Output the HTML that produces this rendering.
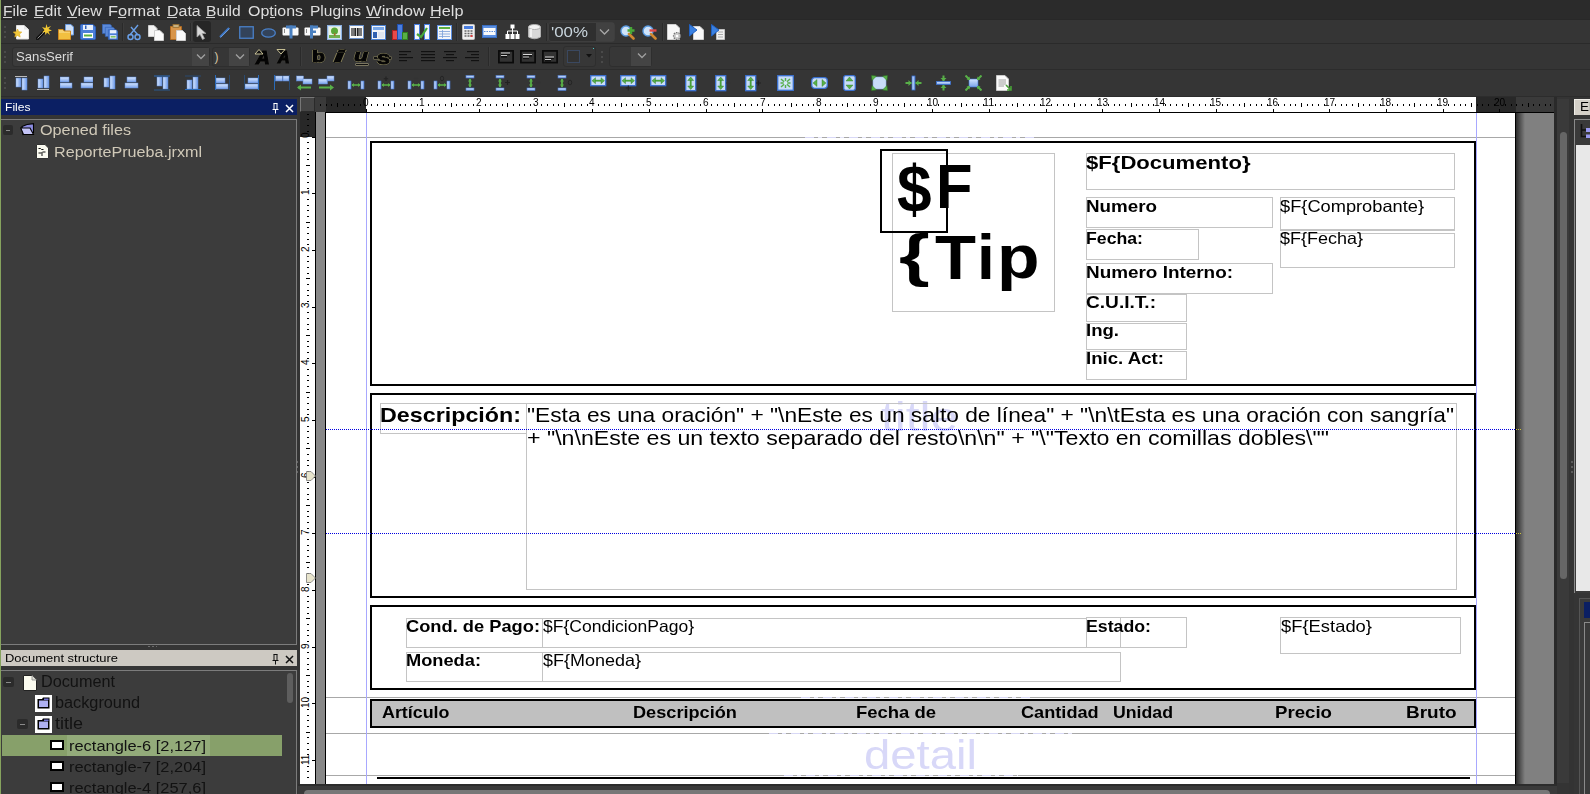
<!DOCTYPE html>
<html><head><meta charset="utf-8"><style>
html,body{margin:0;padding:0;}
body{width:1590px;height:794px;overflow:hidden;position:relative;background:#353535;font-family:"Liberation Sans", sans-serif;}
div,svg{box-sizing:border-box;}
</style></head><body>
<div style="position:absolute;left:0px;top:0px;width:1590px;height:20px;background:#2b2b2b"></div>
<div style="position:absolute;left:0px;top:19px;width:1590px;height:1px;background:#282828"></div>
<div style="position:absolute;left:0px;top:20px;width:1590px;height:23px;background:#353535"></div>
<div style="position:absolute;left:0px;top:43px;width:1590px;height:1px;background:#2a2a2a"></div>
<div style="position:absolute;left:0px;top:44px;width:1590px;height:25px;background:#353535"></div>
<div style="position:absolute;left:0px;top:69px;width:1590px;height:1px;background:#2c2c2c"></div>
<div style="position:absolute;left:0px;top:70px;width:1590px;height:26px;background:#353535"></div>
<div style="position:absolute;left:0px;top:96px;width:1590px;height:1px;background:#2c2c2c"></div>
<div style="position:absolute;left:0px;top:97px;width:1590px;height:697px;background:#353535"></div>
<div style="position:absolute;left:3px;top:3.15px;font-size:15.3px;line-height:15.3px;white-space:pre;color:#dedede;transform:scaleX(1.0139);transform-origin:0 0;">File</div>
<div style="position:absolute;left:3px;top:17px;width:9px;height:1px;background:#d0d0d0"></div>
<div style="position:absolute;left:34px;top:3.15px;font-size:15.3px;line-height:15.3px;white-space:pre;color:#dedede;transform:scaleX(1.0395);transform-origin:0 0;">Edit</div>
<div style="position:absolute;left:34px;top:17px;width:9px;height:1px;background:#d0d0d0"></div>
<div style="position:absolute;left:66.7px;top:3.15px;font-size:15.3px;line-height:15.3px;white-space:pre;color:#dedede;transform:scaleX(1.0641);transform-origin:0 0;">View</div>
<div style="position:absolute;left:66.7px;top:17px;width:10px;height:1px;background:#d0d0d0"></div>
<div style="position:absolute;left:108px;top:3.15px;font-size:15.3px;line-height:15.3px;white-space:pre;color:#dedede;transform:scaleX(1.0732);transform-origin:0 0;">Format</div>
<div style="position:absolute;left:117.5px;top:17px;width:8.5px;height:1px;background:#d0d0d0"></div>
<div style="position:absolute;left:167.3px;top:3.15px;font-size:15.3px;line-height:15.3px;white-space:pre;color:#dedede;transform:scaleX(1.0429);transform-origin:0 0;">Data</div>
<div style="position:absolute;left:167.3px;top:17px;width:10px;height:1px;background:#d0d0d0"></div>
<div style="position:absolute;left:206.3px;top:3.15px;font-size:15.3px;line-height:15.3px;white-space:pre;color:#dedede;transform:scaleX(1.0201);transform-origin:0 0;">Build</div>
<div style="position:absolute;left:206.3px;top:17px;width:9px;height:1px;background:#d0d0d0"></div>
<div style="position:absolute;left:247.8px;top:3.15px;font-size:15.3px;line-height:15.3px;white-space:pre;color:#dedede;transform:scaleX(1.0433);transform-origin:0 0;">Options</div>
<div style="position:absolute;left:269.8px;top:17px;width:5px;height:1px;background:#d0d0d0"></div>
<div style="position:absolute;left:310px;top:3.15px;font-size:15.3px;line-height:15.3px;white-space:pre;color:#dedede;transform:scaleX(1.0165);transform-origin:0 0;">Plugins</div>
<div style="position:absolute;left:366px;top:3.15px;font-size:15.3px;line-height:15.3px;white-space:pre;color:#dedede;transform:scaleX(1.0844);transform-origin:0 0;">Window</div>
<div style="position:absolute;left:366px;top:17px;width:14px;height:1px;background:#d0d0d0"></div>
<div style="position:absolute;left:429.8px;top:3.15px;font-size:15.3px;line-height:15.3px;white-space:pre;color:#dedede;transform:scaleX(1.0645);transform-origin:0 0;">Help</div>
<div style="position:absolute;left:429.8px;top:17px;width:10px;height:1px;background:#d0d0d0"></div>
<div style="position:absolute;left:1px;top:99px;width:296px;height:16px;background:#0b1f63"></div>
<div style="position:absolute;left:4.5px;top:101.57px;font-size:11.5px;line-height:11.5px;white-space:pre;color:#ffffff;transform:scaleX(1.0502);transform-origin:0 0;">Files</div>
<div style="position:absolute;left:1px;top:119px;width:296px;height:526px;background:#3c3c3c;border-top:1px solid #7c7c7c;border-right:1px solid #7c7c7c;border-bottom:1px solid #7c7c7c"></div>
<div style="position:absolute;left:148px;top:646px;width:9px;height:1px;background:repeating-linear-gradient(90deg,#6a6a6a 0 2px,transparent 2px 4px)"></div>
<div style="position:absolute;left:1px;top:650px;width:296px;height:16px;background:#cdc9c2"></div>
<div style="position:absolute;left:4.7px;top:652.57px;font-size:11.5px;line-height:11.5px;white-space:pre;color:#000;transform:scaleX(1.1260);transform-origin:0 0;">Document structure</div>
<div style="position:absolute;left:1px;top:670px;width:296px;height:124px;background:#3c3c3c;border-top:1px solid #7c7c7c;border-right:1px solid #7c7c7c"></div>
<div style="position:absolute;left:285px;top:673px;width:7px;height:30px;background:#6a6a6a;border-radius:4px"></div>
<div style="position:absolute;left:298px;top:97px;width:1275px;height:697px;background:#343434"></div>
<div style="position:absolute;left:300px;top:97px;width:15px;height:15px;background:#454545;border-top:1px solid #777;border-left:1px solid #777;border-bottom:1px solid #2a2a2a;border-right:1px solid #2a2a2a"></div>
<div style="position:absolute;left:315px;top:97px;width:11px;height:15px;background:#3a3a3a"></div>
<div style="position:absolute;left:326px;top:97px;width:40px;height:15px;background:#282828"></div>
<div style="position:absolute;left:366px;top:97px;width:1110px;height:15px;background:#ffffff"></div>
<div style="position:absolute;left:1476px;top:97px;width:40px;height:15px;background:#282828"></div>
<div style="position:absolute;left:1516px;top:97px;width:38px;height:15px;background:#3a3a3a"></div>
<div style="position:absolute;left:315px;top:112px;width:1239px;height:1px;background:#000"></div>
<div style="position:absolute;left:300px;top:112px;width:15px;height:25px;background:#282828"></div>
<div style="position:absolute;left:300px;top:137px;width:15px;height:647px;background:#ffffff"></div>
<div style="position:absolute;left:315px;top:112px;width:1px;height:672px;background:#000"></div>
<div style="position:absolute;left:316px;top:112px;width:9px;height:672px;background:#888888"></div>
<div style="position:absolute;left:325px;top:112px;width:1px;height:672px;background:#000"></div>
<div style="position:absolute;left:326px;top:113px;width:1189px;height:671px;background:#ffffff"></div>
<div style="position:absolute;left:1515px;top:113px;width:1px;height:671px;background:#000"></div>
<div style="position:absolute;left:1516px;top:113px;width:38px;height:671px;background:linear-gradient(90deg,#2a2a2a 0px,#808080 9px,#808080 100%)"></div>
<div style="position:absolute;left:1554px;top:97px;width:3px;height:697px;background:#2a2a2a"></div>
<div style="position:absolute;left:1557px;top:99px;width:12px;height:684px;background:#3a3a3a"></div>
<div style="position:absolute;left:1560px;top:132px;width:7px;height:447px;background:#666;border-radius:4px"></div>
<div style="position:absolute;left:1569px;top:97px;width:5px;height:697px;background:#333"></div>
<div style="position:absolute;left:298px;top:784px;width:1259px;height:10px;background:#3a3a3a"></div>
<div style="position:absolute;left:298px;top:784px;width:1259px;height:2px;background:#2c2c2c"></div>
<div style="position:absolute;left:304px;top:790px;width:1246px;height:10px;background:#777;border-radius:4px"></div>
<div style="position:absolute;left:326px;top:137px;width:1189px;height:1px;background:#a8a8a8"></div>
<div style="position:absolute;left:326px;top:697px;width:1189px;height:1px;background:#a8a8a8"></div>
<div style="position:absolute;left:326px;top:733px;width:1189px;height:1px;background:#a8a8a8"></div>
<div style="position:absolute;left:326px;top:775px;width:1189px;height:1px;background:#a8a8a8"></div>
<div style="position:absolute;left:366px;top:113px;width:1px;height:671px;background:#a8a8ff"></div>
<div style="position:absolute;left:1476px;top:113px;width:1px;height:671px;background:#a8a8ff"></div>
<div style="position:absolute;left:1574px;top:99px;width:16px;height:16px;background:#d4d0c8;border-top:1px solid #f0eee8;border-left:1px solid #f0eee8"></div>
<div style="position:absolute;left:1579.5px;top:100.84px;font-size:12px;line-height:12px;white-space:pre;color:#000;transform:scaleX(1.1245);transform-origin:0 0;">El</div>
<div style="position:absolute;left:1574px;top:119px;width:16px;height:474px;background:#3a3a3a;border-top:1px solid #8a8a8a;border-left:1px solid #8a8a8a"></div>
<div style="position:absolute;left:1576px;top:145px;width:14px;height:446px;background:#e8e8e8"></div>
<div style="position:absolute;left:1579px;top:598px;width:11px;height:196px;background:#3a3a3a;border-top:1px solid #555;border-left:1px solid #555"></div>
<div style="position:absolute;left:1584px;top:602px;width:6px;height:16px;background:#0b1f63"></div>
<div style="position:absolute;left:1584px;top:622px;width:6px;height:172px;border-left:1px solid #8a8a8a;border-top:1px solid #8a8a8a"></div>
<div style="position:absolute;left:881px;top:397.29px;font-size:41px;line-height:41px;white-space:pre;color:#d8d8f8;transform:scaleX(1.2067);transform-origin:0 0;">title</div>
<div style="position:absolute;left:863.5px;top:734.79px;font-size:41px;line-height:41px;white-space:pre;color:#d8d8f8;transform:scaleX(1.1529);transform-origin:0 0;">detail</div>
<div style="position:absolute;left:370px;top:141px;width:1106px;height:245px;border:2px solid #000;"></div>
<div style="position:absolute;left:370px;top:393px;width:1106px;height:205px;border:2px solid #000;"></div>
<div style="position:absolute;left:370px;top:605px;width:1106px;height:85px;border:2px solid #000;"></div>
<div style="position:absolute;left:370px;top:699px;width:1106px;height:29px;border:2px solid #000;background:#c0c0c0"></div>
<div style="position:absolute;left:377px;top:777px;width:1093px;height:2px;background:#000"></div>
<div style="position:absolute;left:892px;top:153px;width:163px;height:159px;border:1px solid #c4c4c4"></div>
<div style="position:absolute;left:880px;top:149px;width:68px;height:84px;border:2px solid #000"></div>
<div style="position:absolute;left:896.60px;top:156.41px;font-size:66.17px;line-height:66.17px;white-space:pre;color:#000;font-weight:bold;transform:scaleX(0.9395);transform-origin:0 0;">$</div>
<div style="position:absolute;left:935.77px;top:156.17px;font-size:62.29px;line-height:62.29px;white-space:pre;color:#000;font-weight:bold;transform:scaleX(0.9589);transform-origin:0 0;">F</div>
<div style="position:absolute;left:898.57px;top:226.65px;font-size:57.50px;line-height:57.50px;white-space:pre;color:#000;font-weight:bold;transform:scaleX(1.3745);transform-origin:0 0;">{</div>
<div style="position:absolute;left:935.00px;top:225.95px;font-size:63.15px;line-height:63.15px;white-space:pre;color:#000;font-weight:bold;transform:scaleX(1.0629);transform-origin:0 0;">T</div>
<div style="position:absolute;left:977.00px;top:226.03px;font-size:63.05px;line-height:63.05px;white-space:pre;color:#000;font-weight:bold;transform:scaleX(1.0151);transform-origin:0 0;">i</div>
<div style="position:absolute;left:997.05px;top:227.28px;font-size:60.47px;line-height:60.47px;white-space:pre;color:#000;font-weight:bold;transform:scaleX(1.1513);transform-origin:0 0;">p</div>
<div style="position:absolute;left:1086px;top:153px;width:369px;height:37px;border:1px solid #c4c4c4"></div>
<div style="position:absolute;left:1086px;top:154.14px;font-size:18.5px;line-height:18.5px;white-space:pre;color:#000;font-weight:bold;transform:scaleX(1.1942);transform-origin:0 0;">$F{Documento}</div>
<div style="position:absolute;left:1086px;top:197px;width:187px;height:31px;border:1px solid #c4c4c4"></div>
<div style="position:absolute;left:1086px;top:197.93px;font-size:16.5px;line-height:16.5px;white-space:pre;color:#000;font-weight:bold;transform:scaleX(1.1388);transform-origin:0 0;">Numero</div>
<div style="position:absolute;left:1280px;top:197px;width:175px;height:33px;border:1px solid #c4c4c4"></div>
<div style="position:absolute;left:1280px;top:197.83px;font-size:16.5px;line-height:16.5px;white-space:pre;color:#000;transform:scaleX(1.1054);transform-origin:0 0;">$F{Comprobante}</div>
<div style="position:absolute;left:1280px;top:230px;width:175px;height:1px;background:#c4c4c4"></div>
<div style="position:absolute;left:1086px;top:229px;width:113px;height:31px;border:1px solid #c4c4c4"></div>
<div style="position:absolute;left:1086px;top:229.73px;font-size:16.5px;line-height:16.5px;white-space:pre;color:#000;font-weight:bold;transform:scaleX(1.0717);transform-origin:0 0;">Fecha:</div>
<div style="position:absolute;left:1280px;top:233px;width:175px;height:35px;border:1px solid #c4c4c4"></div>
<div style="position:absolute;left:1280px;top:229.93px;font-size:16.5px;line-height:16.5px;white-space:pre;color:#000;transform:scaleX(1.0901);transform-origin:0 0;">$F{Fecha}</div>
<div style="position:absolute;left:1086px;top:263px;width:187px;height:31px;border:1px solid #c4c4c4"></div>
<div style="position:absolute;left:1086px;top:264.03px;font-size:16.5px;line-height:16.5px;white-space:pre;color:#000;font-weight:bold;transform:scaleX(1.1454);transform-origin:0 0;">Numero Interno:</div>
<div style="position:absolute;left:1086px;top:294px;width:101px;height:28px;border:1px solid #c4c4c4"></div>
<div style="position:absolute;left:1086px;top:293.83px;font-size:16.5px;line-height:16.5px;white-space:pre;color:#000;font-weight:bold;transform:scaleX(1.1570);transform-origin:0 0;">C.U.I.T.:</div>
<div style="position:absolute;left:1086px;top:323px;width:101px;height:27px;border:1px solid #c4c4c4"></div>
<div style="position:absolute;left:1086px;top:322.03px;font-size:16.5px;line-height:16.5px;white-space:pre;color:#000;font-weight:bold;transform:scaleX(1.1252);transform-origin:0 0;">Ing.</div>
<div style="position:absolute;left:1086px;top:351px;width:101px;height:29px;border:1px solid #c4c4c4"></div>
<div style="position:absolute;left:1086px;top:350.03px;font-size:16.5px;line-height:16.5px;white-space:pre;color:#000;font-weight:bold;transform:scaleX(1.1294);transform-origin:0 0;">Inic. Act:</div>
<div style="position:absolute;left:380px;top:403px;width:147px;height:31px;border:1px solid #c4c4c4"></div>
<div style="position:absolute;left:380px;top:404.56px;font-size:20.6px;line-height:20.6px;white-space:pre;color:#000;font-weight:bold;transform:scaleX(1.1303);transform-origin:0 0;">Descripción:</div>
<div style="position:absolute;left:526px;top:403px;width:931px;height:187px;border:1px solid #c4c4c4"></div>
<div style="position:absolute;left:527px;top:404.56px;font-size:20.6px;line-height:20.6px;white-space:pre;color:#000;transform:scaleX(1.1042);transform-origin:0 0;">&quot;Esta es una oración&quot; + &quot;\nEste es un salto de línea&quot; + &quot;\n\tEsta es una oración con sangría&quot;</div>
<div style="position:absolute;left:527px;top:428.06px;font-size:20.6px;line-height:20.6px;white-space:pre;color:#000;transform:scaleX(1.1239);transform-origin:0 0;">+ &quot;\n\nEste es un texto separado del resto\n\n&quot; + &quot;\&quot;Texto en comillas dobles\&quot;&quot;</div>
<div style="position:absolute;left:326px;top:429px;width:1196px;height:1px;background:repeating-linear-gradient(90deg,#0000e0 0 1px,transparent 1px 2px)"></div>
<div style="position:absolute;left:326px;top:533px;width:1196px;height:1px;background:repeating-linear-gradient(90deg,#0000e0 0 1px,transparent 1px 2px)"></div>
<div style="position:absolute;left:406px;top:618px;width:137px;height:30px;border:1px solid #c4c4c4"></div>
<div style="position:absolute;left:406px;top:618.23px;font-size:16.5px;line-height:16.5px;white-space:pre;color:#000;font-weight:bold;transform:scaleX(1.1074);transform-origin:0 0;">Cond. de Pago:</div>
<div style="position:absolute;left:542px;top:618px;width:545px;height:30px;border:1px solid #c4c4c4"></div>
<div style="position:absolute;left:543px;top:618.23px;font-size:16.5px;line-height:16.5px;white-space:pre;color:#000;transform:scaleX(1.0619);transform-origin:0 0;">$F{CondicionPago}</div>
<div style="position:absolute;left:406px;top:652px;width:137px;height:30px;border:1px solid #c4c4c4"></div>
<div style="position:absolute;left:406px;top:652.03px;font-size:16.5px;line-height:16.5px;white-space:pre;color:#000;font-weight:bold;transform:scaleX(1.1055);transform-origin:0 0;">Moneda:</div>
<div style="position:absolute;left:542px;top:652px;width:579px;height:30px;border:1px solid #c4c4c4"></div>
<div style="position:absolute;left:543px;top:652.03px;font-size:16.5px;line-height:16.5px;white-space:pre;color:#000;transform:scaleX(1.0900);transform-origin:0 0;">$F{Moneda}</div>
<div style="position:absolute;left:1086px;top:617px;width:101px;height:31px;border:1px solid #c4c4c4"></div>
<div style="position:absolute;left:1120px;top:617px;width:1px;height:31px;background:#c4c4c4"></div>
<div style="position:absolute;left:1086px;top:618.03px;font-size:16.5px;line-height:16.5px;white-space:pre;color:#000;font-weight:bold;transform:scaleX(1.0741);transform-origin:0 0;">Estado:</div>
<div style="position:absolute;left:1280px;top:617px;width:181px;height:37px;border:1px solid #c4c4c4"></div>
<div style="position:absolute;left:1281px;top:618.03px;font-size:16.5px;line-height:16.5px;white-space:pre;color:#000;transform:scaleX(1.1144);transform-origin:0 0;">$F{Estado}</div>
<div style="position:absolute;left:382.2px;top:704.23px;font-size:16.5px;line-height:16.5px;white-space:pre;color:#000;font-weight:bold;transform:scaleX(1.0827);transform-origin:0 0;">Artículo</div>
<div style="position:absolute;left:633.2px;top:704.23px;font-size:16.5px;line-height:16.5px;white-space:pre;color:#000;font-weight:bold;transform:scaleX(1.1000);transform-origin:0 0;">Descripción</div>
<div style="position:absolute;left:855.8000000000001px;top:704.23px;font-size:16.5px;line-height:16.5px;white-space:pre;color:#000;font-weight:bold;transform:scaleX(1.1198);transform-origin:0 0;">Fecha de</div>
<div style="position:absolute;left:1020.7px;top:704.23px;font-size:16.5px;line-height:16.5px;white-space:pre;color:#000;font-weight:bold;transform:scaleX(1.1007);transform-origin:0 0;">Cantidad</div>
<div style="position:absolute;left:1113.2px;top:704.23px;font-size:16.5px;line-height:16.5px;white-space:pre;color:#000;font-weight:bold;transform:scaleX(1.0729);transform-origin:0 0;">Unidad</div>
<div style="position:absolute;left:1275.4px;top:704.23px;font-size:16.5px;line-height:16.5px;white-space:pre;color:#000;font-weight:bold;transform:scaleX(1.1298);transform-origin:0 0;">Precio</div>
<div style="position:absolute;left:1405.6000000000001px;top:704.23px;font-size:16.5px;line-height:16.5px;white-space:pre;color:#000;font-weight:bold;transform:scaleX(1.1500);transform-origin:0 0;">Bruto</div>
<div style="position:absolute;left:3px;top:125px;width:10px;height:10px;background:#2b2b2b;border-radius:2px"></div>
<div style="position:absolute;left:6px;top:130px;width:4px;height:1px;background:#8a8a8a"></div>
<svg style="position:absolute;left:20px;top:123px;" width="15" height="13" viewBox="0 0 15 13"><path d="M2 3.5 L7 1.5 L13.5 0.7 L13.5 9.5 L3 11.5 Z" fill="#8c8ce0" stroke="#000" stroke-width="1.1"/><path d="M0.7 5 L10 5 L13.5 11.5 L3.5 11.5 Z" fill="#c4c4f6" stroke="#000" stroke-width="1.1"/></svg>
<div style="position:absolute;left:39.6px;top:122.28px;font-size:15.5px;line-height:15.5px;white-space:pre;color:#d0c9b8;transform:scaleX(1.0456);transform-origin:0 0;">Opened files</div>
<svg style="position:absolute;left:36px;top:144px;" width="13" height="15" viewBox="0 0 13 15"><path d="M0.5 0.5 H9 L12.5 4 V14.5 H0.5 Z" fill="#fafaf0" stroke="#333" stroke-width="1"/><path d="M2.5 4.5 h2 l1 1 h2 M2.5 9 h3 l1 -1 h3 M6 9 v3" stroke="#111" stroke-width="1" fill="none"/></svg>
<div style="position:absolute;left:54.2px;top:143.88px;font-size:15.5px;line-height:15.5px;white-space:pre;color:#d0c9b8;transform:scaleX(1.0411);transform-origin:0 0;">ReportePrueba.jrxml</div>
<div style="position:absolute;left:3px;top:677px;width:11px;height:10px;background:#2b2b2b;border-radius:2px"></div>
<div style="position:absolute;left:6px;top:682px;width:5px;height:1px;background:#8a8a8a"></div>
<svg style="position:absolute;left:23px;top:675px;" width="14" height="16" viewBox="0 0 14 16"><path d="M0.5 0.5 H9 L13.5 5 V15.5 H0.5 Z" fill="#fbfbef" stroke="#222" stroke-width="1"/><path d="M9 0.5 V5 H13.5" fill="#e0e0d8" stroke="#888" stroke-width="0.8"/></svg>
<div style="position:absolute;left:41.3px;top:674.46px;font-size:16px;line-height:16px;white-space:pre;color:#121212;transform:scaleX(1.0148);transform-origin:0 0;">Document</div>
<div style="position:absolute;left:35px;top:695px;width:17px;height:17px;background:#ffffff"></div>
<svg style="position:absolute;left:37px;top:697px;" width="13" height="12" viewBox="0 0 13 12"><path d="M0.5 2 H5 L6 0.5 H12.5 V11.5 H0.5 Z" fill="#000"/><path d="M2 3.5 H11 V10 H2 Z" fill="#aeb0f0"/><path d="M7 1.5 H11.5 V3 H7 Z" fill="#7070d0"/></svg>
<div style="position:absolute;left:55px;top:694.96px;font-size:16px;line-height:16px;white-space:pre;color:#121212;transform:scaleX(1.0164);transform-origin:0 0;">background</div>
<div style="position:absolute;left:17px;top:719px;width:11px;height:10px;background:#2b2b2b;border-radius:2px"></div>
<div style="position:absolute;left:20px;top:724px;width:5px;height:1px;background:#8a8a8a"></div>
<div style="position:absolute;left:35px;top:716px;width:17px;height:17px;background:#ffffff"></div>
<svg style="position:absolute;left:37px;top:718px;" width="13" height="12" viewBox="0 0 13 12"><path d="M0.5 2 H5 L6 0.5 H12.5 V11.5 H0.5 Z" fill="#000"/><path d="M2 3.5 H11 V10 H2 Z" fill="#aeb0f0"/><path d="M7 1.5 H11.5 V3 H7 Z" fill="#7070d0"/></svg>
<div style="position:absolute;left:55px;top:715.96px;font-size:16px;line-height:16px;white-space:pre;color:#121212;transform:scaleX(1.1242);transform-origin:0 0;">title</div>
<div style="position:absolute;left:2px;top:735px;width:280px;height:21px;background:#87a06a"></div>
<div style="position:absolute;left:67px;top:735px;width:143px;height:21px;background:#93ab7a"></div>
<div style="position:absolute;left:50px;top:740px;width:14px;height:10px;background:#fff;border:2px solid #000"></div>
<div style="position:absolute;left:69.2px;top:737.88px;font-size:15.5px;line-height:15.5px;white-space:pre;color:#121212;transform:scaleX(1.0598);transform-origin:0 0;">rectangle-6 [2,127]</div>
<div style="position:absolute;left:50px;top:761px;width:14px;height:10px;background:#fff;border:2px solid #000"></div>
<div style="position:absolute;left:69.2px;top:758.88px;font-size:15.5px;line-height:15.5px;white-space:pre;color:#121212;transform:scaleX(1.0598);transform-origin:0 0;">rectangle-7 [2,204]</div>
<div style="position:absolute;left:50px;top:782px;width:14px;height:10px;background:#fff;border:2px solid #000"></div>
<div style="position:absolute;left:69.2px;top:779.88px;font-size:15.5px;line-height:15.5px;white-space:pre;color:#121212;transform:scaleX(1.0598);transform-origin:0 0;">rectangle-4 [257,6]</div>
<div style="position:absolute;left:283px;top:671px;width:12px;height:123px;background:#3c3c3c"></div>
<div style="position:absolute;left:287px;top:673px;width:6px;height:30px;background:#5e5e5e;border-radius:3px"></div>
<svg style="position:absolute;left:271px;top:103px;" width="9" height="11" viewBox="0 0 9 11"><path d="M2.5 0.5 H6.5 M3 0.5 V6 M6 0.5 V6 M1.5 6.5 H7.5 M4.5 6.5 V10.5" stroke="#ffffff" stroke-width="1" fill="none"/></svg>
<svg style="position:absolute;left:285px;top:104px;" width="9" height="9" viewBox="0 0 9 9"><path d="M1 1 L8 8 M8 1 L1 8" stroke="#ffffff" stroke-width="1.5"/></svg>
<svg style="position:absolute;left:271px;top:654px;" width="9" height="11" viewBox="0 0 9 11"><path d="M2.5 0.5 H6.5 M3 0.5 V6 M6 0.5 V6 M1.5 6.5 H7.5 M4.5 6.5 V10.5" stroke="#111111" stroke-width="1" fill="none"/></svg>
<svg style="position:absolute;left:285px;top:655px;" width="9" height="9" viewBox="0 0 9 9"><path d="M1 1 L8 8 M8 1 L1 8" stroke="#111111" stroke-width="1.5"/></svg>
<div style="position:absolute;left:4px;top:26px;width:2px;height:2px;background:#4a4a4a"></div>
<div style="position:absolute;left:4px;top:31px;width:2px;height:2px;background:#4a4a4a"></div>
<div style="position:absolute;left:4px;top:36px;width:2px;height:2px;background:#4a4a4a"></div>
<svg style="position:absolute;left:13px;top:25px;" width="17" height="15" viewBox="0 0 17 15"><path d="M3.5 0.5 H11 L15.5 4.5 V14 H3.5 Z" fill="#fbfbfb" stroke="#e0e0e0"/><path d="M11 0.5 V4.5 H15.5" fill="#e6e6e6"/><path d="M4.5 4 L5.8 6.8 L8.8 7.1 L6.5 9.1 L7.2 12.1 L4.5 10.5 L1.8 12.1 L2.5 9.1 L0.2 7.1 L3.2 6.8 Z" fill="#f2c83a" stroke="#d8a820" stroke-width="0.6"/></svg>
<svg style="position:absolute;left:36px;top:24px;" width="16" height="16" viewBox="0 0 16 16"><path d="M1.5 14.5 L10 6" stroke="#111" stroke-width="3.2" stroke-linecap="round"/><path d="M1.5 14.5 L10 6" stroke="#888" stroke-width="1" /><circle cx="10.5" cy="5.5" r="1.6" fill="#fff"/><path d="M10.5 0 L11.5 3.5 L15 2 L12.5 5 L16 6.5 L12.5 7.5 L14 11 L11 8.5 L9.5 11 L9 8 L6 8.5 L8.5 6 L6 3 L9.5 4 Z" fill="#f3c933"/></svg>
<svg style="position:absolute;left:58px;top:24px;" width="17" height="16" viewBox="0 0 17 16"><path d="M7.5 0.5 H13 L15.5 3 V11 H7.5 Z" fill="#cfe0f8" stroke="#6a9ae0"/><path d="M0.5 5.5 H5 L6 7 H12.5 V15.5 H0.5 Z" fill="#f6d270" stroke="#d08a20"/><path d="M1 9 H12 V15 H1 Z" fill="#f2c040"/></svg>
<svg style="position:absolute;left:80px;top:24px;" width="16" height="16" viewBox="0 0 16 16"><path d="M0.5 1.5 Q0.5 0.5 1.5 0.5 H13 L15.5 3 V14.5 Q15.5 15.5 14.5 15.5 H1.5 Q0.5 15.5 0.5 14.5 Z" fill="#4c7fd8" stroke="#2d5fb8"/><rect x="3" y="1" width="10" height="5" fill="#e8f0fc"/><rect x="5" y="1.5" width="1.5" height="3.5" fill="#2d5fb8"/><rect x="3" y="9" width="10" height="5" fill="#ffffff"/><rect x="4" y="10.5" width="8" height="2" fill="#5cb040"/></svg>
<svg style="position:absolute;left:102px;top:24px;" width="16" height="16" viewBox="0 0 16 16"><g transform="translate(0,0) scale(0.62)"><path d="M0.5 0.5 H13 L15.5 3 V15.5 H0.5 Z" fill="#5c8ad8" stroke="#2d5fb8"/></g><g transform="translate(3,3) scale(0.62)"><path d="M0.5 0.5 H13 L15.5 3 V15.5 H0.5 Z" fill="#5c8ad8" stroke="#2d5fb8"/></g><g transform="translate(6,5.5) scale(0.64)"><path d="M0.5 0.5 H13 L15.5 3 V15.5 H0.5 Z" fill="#4c7fd8" stroke="#2d5fb8"/><rect x="3" y="1" width="10" height="5" fill="#e8f0fc"/><rect x="3" y="9" width="10" height="5" fill="#fff"/><rect x="4" y="10.5" width="8" height="2" fill="#5cb040"/></g></svg>
<div style="position:absolute;left:122px;top:23px;width:1px;height:18px;background:#2a2a2a"></div>
<div style="position:absolute;left:123px;top:23px;width:1px;height:18px;background:#3c3c3c"></div>
<svg style="position:absolute;left:127px;top:24px;" width="14" height="17" viewBox="0 0 14 17"><path d="M3 11 L11 1 M11 11 L4 3" stroke="#6aa0e8" stroke-width="1.4"/><circle cx="3.5" cy="13" r="2.5" fill="none" stroke="#6aa0e8" stroke-width="1.5"/><circle cx="10.5" cy="13" r="2.5" fill="none" stroke="#6aa0e8" stroke-width="1.5"/></svg>
<svg style="position:absolute;left:148px;top:25px;" width="16" height="16" viewBox="0 0 16 16"><path d="M0.5 0.5 H6 L9 3.5 V11.5 H0.5 Z" fill="#f4f4f4" stroke="#cfcfcf"/><path d="M6.5 5.5 H12 L15.5 9 V15.5 H6.5 Z" fill="#fafafa" stroke="#cfcfcf"/></svg>
<svg style="position:absolute;left:170px;top:24px;" width="16" height="17" viewBox="0 0 16 17"><path d="M0.5 2.5 H11.5 V15.5 H0.5 Z" fill="#d8954a" stroke="#b06a20"/><rect x="3" y="0.5" width="6" height="3" fill="#c8b080" stroke="#9a7030" stroke-width="0.8"/><path d="M6.5 6.5 H12.5 L15.5 9.5 V16.5 H6.5 Z" fill="#fafafa" stroke="#cfcfcf"/></svg>
<div style="position:absolute;left:190px;top:23px;width:1px;height:18px;background:#2a2a2a"></div>
<div style="position:absolute;left:191px;top:23px;width:1px;height:18px;background:#3c3c3c"></div>
<div style="position:absolute;left:193px;top:21px;width:18px;height:21px;background:#262626;border-radius:3px"></div>
<svg style="position:absolute;left:196px;top:25px;" width="12" height="15" viewBox="0 0 12 15"><path d="M1 0.5 L1 12 L4 9.5 L6.5 14.5 L8.5 13.5 L6 8.5 L10 8.5 Z" fill="#d8d8d8" stroke="#9a9a9a" stroke-width="0.8"/></svg>
<svg style="position:absolute;left:219px;top:27px;" width="11" height="11" viewBox="0 0 11 11"><path d="M1 10 L10 1" stroke="#3f78c8" stroke-width="2"/><path d="M1.5 10.5 L10.5 1.5" stroke="#7aaae8" stroke-width="0.7"/></svg>
<svg style="position:absolute;left:239px;top:26px;" width="15" height="13" viewBox="0 0 15 13"><rect x="0.75" y="0.75" width="13.5" height="11.5" fill="#33435a" stroke="#4a80c8" stroke-width="1.3"/></svg>
<svg style="position:absolute;left:261px;top:28px;" width="15" height="10" viewBox="0 0 15 10"><ellipse cx="7.5" cy="5" rx="6.8" ry="4.2" fill="#33435a" stroke="#4a80c8" stroke-width="1.3"/></svg>
<svg style="position:absolute;left:282px;top:24px;" width="17" height="15" viewBox="0 0 17 15"><rect x="0.5" y="3.5" width="16" height="8" rx="1" fill="#fafafa"/><rect x="2" y="5" width="1" height="4" fill="#888"/><rect x="4" y="1.5" width="10" height="3" fill="#4a80c0"/><rect x="7.5" y="1.5" width="3" height="13" fill="#4a80c0"/></svg>
<svg style="position:absolute;left:304px;top:24px;" width="17" height="15" viewBox="0 0 17 15"><rect x="0.5" y="3.5" width="16" height="8" rx="1" fill="#fafafa"/><rect x="2" y="5" width="1" height="4" fill="#888"/><rect x="6" y="1.5" width="8" height="3" fill="#4a80c0"/><rect x="6" y="6.5" width="6" height="2.5" fill="#4a80c0"/><rect x="6" y="1.5" width="3" height="13" fill="#4a80c0"/></svg>
<svg style="position:absolute;left:327px;top:25px;" width="15" height="15" viewBox="0 0 15 15"><rect x="0.5" y="0.5" width="14" height="14" fill="#cfe0f4" stroke="#8ab0e0"/><rect x="2" y="2" width="11" height="11" fill="#e8f4e0"/><rect x="2" y="10" width="11" height="3" fill="#70b050"/><circle cx="7.5" cy="6" r="3.5" fill="#5aa838"/><rect x="7" y="8" width="1.5" height="3" fill="#a07030"/></svg>
<svg style="position:absolute;left:349px;top:25px;" width="15" height="14" viewBox="0 0 15 14"><rect x="0.5" y="0.5" width="14" height="13" fill="#fafafa" stroke="#6a90c8"/><path d="M3 3 V11 M5 3 V11 M6.5 3 V11 M8.5 3 V11 M10 3 V11 M12 3 V11" stroke="#222" stroke-width="1.2"/></svg>
<svg style="position:absolute;left:371px;top:25px;" width="15" height="15" viewBox="0 0 15 15"><rect x="0.5" y="0.5" width="14" height="14" fill="#f2f4f8" stroke="#4a80d0"/><rect x="2" y="2" width="11" height="3" fill="#7aa8e8"/><rect x="2" y="7" width="4" height="6" fill="#3060b0"/><rect x="7" y="7" width="6" height="6" fill="#e0e6f0"/></svg>
<svg style="position:absolute;left:392px;top:24px;" width="16" height="16" viewBox="0 0 16 16"><rect x="0.5" y="6.5" width="5" height="9" fill="#e84a4a" stroke="#b02020"/><rect x="5.5" y="0.5" width="5" height="15" fill="#4a7ee0" stroke="#2050b0"/><rect x="10.5" y="8.5" width="5" height="7" fill="#58b048" stroke="#308020"/></svg>
<svg style="position:absolute;left:414px;top:24px;" width="16" height="16" viewBox="0 0 16 16"><rect x="0.5" y="0.5" width="5" height="15" fill="#f4f6fa" stroke="#4a7ee0"/><rect x="10.5" y="0.5" width="5" height="15" fill="#f4f6fa" stroke="#4a7ee0"/><path d="M3 10 L7 13 L13 4" stroke="#48a838" stroke-width="2.2" fill="none"/></svg>
<svg style="position:absolute;left:437px;top:25px;" width="15" height="15" viewBox="0 0 15 15"><rect x="0.5" y="0.5" width="14" height="14" fill="#f4f6fa" stroke="#5a8ee0"/><rect x="2" y="2" width="11" height="2" fill="#5cb040"/><path d="M2 6.5 H13 M2 9 H13 M2 11.5 H13 M5.5 5 V13" stroke="#7aa0d8" stroke-width="0.8"/></svg>
<div style="position:absolute;left:456px;top:23px;width:1px;height:18px;background:#2a2a2a"></div>
<div style="position:absolute;left:457px;top:23px;width:1px;height:18px;background:#3c3c3c"></div>
<svg style="position:absolute;left:462px;top:24px;" width="13" height="16" viewBox="0 0 13 16"><rect x="0.5" y="0.5" width="12" height="15" rx="1" fill="#f0f0f0" stroke="#c0c0c0"/><rect x="2" y="2" width="9" height="3" fill="#4a7ee0"/><path d="M2.5 7 h2 M5.5 7 h2 M8.5 7 h2 M2.5 9.5 h2 M5.5 9.5 h2 M8.5 9.5 h2 M2.5 12 h2 M5.5 12 h2 M8.5 12 h2" stroke="#666" stroke-width="1.3"/><rect x="8.5" y="11" width="2" height="2" fill="#e04040"/></svg>
<svg style="position:absolute;left:482px;top:25px;" width="15" height="13" viewBox="0 0 15 13"><rect x="0.5" y="0.5" width="14" height="12" fill="#5a8ee0" stroke="#3a6ec0"/><rect x="1.5" y="3" width="12" height="7" fill="#fafafa"/><path d="M2 6.5 H13" stroke="#5a8ee0" stroke-dasharray="1.5 1"/></svg>
<svg style="position:absolute;left:505px;top:24px;" width="15" height="16" viewBox="0 0 15 16"><rect x="5.5" y="0.5" width="4" height="4" fill="#fff"/><path d="M7.5 4 V7 M2.5 7 H12.5 M2.5 7 V10 M7.5 7 V10 M12.5 7 V10" stroke="#fff"/><rect x="0.5" y="10" width="4" height="5" fill="#fff"/><rect x="5.5" y="10" width="4" height="5" fill="#fff"/><rect x="10.5" y="10" width="4" height="5" fill="#fff"/></svg>
<svg style="position:absolute;left:528px;top:24px;" width="13" height="16" viewBox="0 0 13 16"><path d="M0.5 3 V13 Q6.5 16.5 12.5 13 V3" fill="#d8d8d8" stroke="#b0b0b0"/><ellipse cx="6.5" cy="3" rx="6" ry="2.5" fill="#f4f4f4" stroke="#b0b0b0"/><rect x="2" y="5" width="2" height="8" fill="#f0f0f0"/></svg>
<div style="position:absolute;left:546px;top:23px;width:1px;height:18px;background:#2a2a2a"></div>
<div style="position:absolute;left:547px;top:23px;width:1px;height:18px;background:#3c3c3c"></div>
<div style="position:absolute;left:548px;top:22px;width:67px;height:20px;background:#2f2f2f;border:1px solid #3e3e3e;border-radius:3px"></div>
<div style="position:absolute;left:596px;top:23px;width:18px;height:18px;background:#414141"></div>
<svg style="position:absolute;left:599px;top:28px;" width="11" height="8" viewBox="0 0 11 8"><path d="M1 1.5 L5.5 6 L10 1.5" stroke="#a8a8a8" stroke-width="1.3" fill="none"/></svg>
<div style="position:absolute;left:551px;top:25.15px;font-size:14px;line-height:14px;white-space:pre;color:#c8d4dc;transform:scaleX(1.2051);transform-origin:0 0;">&#x27;00%</div>
<svg style="position:absolute;left:620px;top:25px;" width="15" height="15" viewBox="0 0 15 15"><circle cx="6" cy="6" r="5" fill="#cfe4fa" stroke="#5a9ae0" stroke-width="1.4"/><path d="M9 9 L13.5 13.5" stroke="#d08830" stroke-width="2.6" stroke-linecap="round"/><path d="M11 2 V9 M7.5 5.5 H14.5" stroke="#48a838" stroke-width="2.4"/></svg>
<svg style="position:absolute;left:642px;top:25px;" width="15" height="15" viewBox="0 0 15 15"><circle cx="6" cy="6" r="5" fill="#cfe4fa" stroke="#5a9ae0" stroke-width="1.4"/><path d="M9 9 L13.5 13.5" stroke="#d08830" stroke-width="2.6" stroke-linecap="round"/><path d="M7.5 5.5 H14.5" stroke="#e04848" stroke-width="2.4"/></svg>
<div style="position:absolute;left:662px;top:23px;width:1px;height:18px;background:#2a2a2a"></div>
<div style="position:absolute;left:663px;top:23px;width:1px;height:18px;background:#3c3c3c"></div>
<svg style="position:absolute;left:667px;top:24px;" width="15" height="17" viewBox="0 0 15 17"><path d="M0.5 0.5 H9 L12.5 4 V15.5 H0.5 Z" fill="#f8f8f8" stroke="#d0d0d0"/><circle cx="10" cy="12" r="3.5" fill="#c8c8c8" stroke="#777" stroke-width="1.2" stroke-dasharray="1.5 1"/><circle cx="10" cy="12" r="1.3" fill="#fff"/></svg>
<svg style="position:absolute;left:689px;top:24px;" width="15" height="16" viewBox="0 0 15 16"><path d="M4.5 2.5 H11 L14.5 6 V15.5 H4.5 Z" fill="#f8f8f8" stroke="#d0d0d0"/><path d="M0.5 0.5 L8 6 L0.5 12 Z" fill="#3a80e0" stroke="#2060c0"/></svg>
<svg style="position:absolute;left:711px;top:24px;" width="15" height="17" viewBox="0 0 15 17"><path d="M5.5 5.5 H13.5 V15.5 H5.5 Z" fill="#f0f0f0" stroke="#c0c0c0"/><path d="M7 8 H12 M7 10.5 H12 M7 13 H12" stroke="#aaa"/><path d="M0.5 0.5 L8 6 L0.5 12 Z" fill="#3a80e0" stroke="#2060c0"/></svg>
<svg width="0" height="0" style="position:absolute"><defs><linearGradient id="gv" x1="0" y1="0" x2="1" y2="0"><stop offset="0" stop-color="#d6e6ff"/><stop offset="1" stop-color="#6e9ae8"/></linearGradient><linearGradient id="gh" x1="0" y1="0" x2="0" y2="1"><stop offset="0" stop-color="#d6e6ff"/><stop offset="1" stop-color="#7aa2ea"/></linearGradient></defs></svg>
<div style="position:absolute;left:4px;top:51px;width:2px;height:2px;background:#4a4a4a"></div>
<div style="position:absolute;left:4px;top:56px;width:2px;height:2px;background:#4a4a4a"></div>
<div style="position:absolute;left:4px;top:61px;width:2px;height:2px;background:#4a4a4a"></div>
<div style="position:absolute;left:12px;top:47px;width:198px;height:20px;background:#3b3b3b;border:1px solid #2e2e2e;border-radius:3px"></div>
<div style="position:absolute;left:192px;top:48px;width:17px;height:18px;background:#444444"></div>
<svg style="position:absolute;left:196px;top:53px;" width="10" height="8" viewBox="0 0 10 8"><path d="M1 1.5 L5 5.5 L9 1.5" stroke="#a0a0a0" stroke-width="1.3" fill="none"/></svg>
<div style="position:absolute;left:16.3px;top:50.70px;font-size:12.4px;line-height:12.4px;white-space:pre;color:#dadada;transform:scaleX(1.0608);transform-origin:0 0;">SansSerif</div>
<div style="position:absolute;left:212px;top:47px;width:38px;height:20px;background:#363636;border:1px solid #2e2e2e;border-radius:3px"></div>
<div style="position:absolute;left:229px;top:48px;width:20px;height:18px;background:#444444"></div>
<svg style="position:absolute;left:235px;top:53px;" width="10" height="8" viewBox="0 0 10 8"><path d="M1 1.5 L5 5.5 L9 1.5" stroke="#a0a0a0" stroke-width="1.3" fill="none"/></svg>
<div style="position:absolute;left:214.5px;top:50.84px;font-size:12px;line-height:12px;white-space:pre;color:#d8c8a8;transform:scaleX(1.0000);transform-origin:0 0;">)</div>
<div style="position:absolute;left:256px;top:47.92px;font-size:19px;line-height:19px;white-space:pre;color:#050505;font-weight:bold;transform:scaleX(0.9960);transform-origin:0 0;font-style:italic;-webkit-text-stroke:1.2px #050505;text-shadow:0 0 1.5px #6a6450;">A</div>
<svg style="position:absolute;left:254px;top:48px;" width="10" height="8" viewBox="0 0 10 8"><path d="M1 6 L5 1.5 L9 6 Z" fill="#111" stroke="#d8d0a0" stroke-width="0.9"/></svg>
<div style="position:absolute;left:278px;top:50.46px;font-size:16px;line-height:16px;white-space:pre;color:#050505;font-weight:bold;transform:scaleX(0.9963);transform-origin:0 0;font-style:italic;-webkit-text-stroke:1.2px #050505;text-shadow:0 0 1.5px #6a6450;">A</div>
<svg style="position:absolute;left:276px;top:48px;" width="10" height="8" viewBox="0 0 10 8"><path d="M1 1.5 L5 6 L9 1.5 Z" fill="#111" stroke="#d8d0a0" stroke-width="0.9"/></svg>
<div style="position:absolute;left:300px;top:47px;width:1px;height:19px;background:#2a2a2a"></div>
<div style="position:absolute;left:301px;top:47px;width:1px;height:19px;background:#3c3c3c"></div>
<div style="position:absolute;left:311.5px;top:49.46px;font-size:16px;line-height:16px;white-space:pre;color:#050505;font-weight:bold;transform:scaleX(1.3291);transform-origin:0 0;-webkit-text-stroke:0.9px #050505;text-shadow:0.9px 0 0 #8a845c,-0.9px 0 0 #8a845c,0 0.9px 0 #8a845c,0 -0.9px 0 #8a845c;">b</div>
<div style="position:absolute;left:334px;top:49.46px;font-size:16px;line-height:16px;white-space:pre;color:#050505;font-weight:bold;transform:scaleX(2.2456);transform-origin:0 0;font-style:italic;-webkit-text-stroke:0.9px #050505;text-shadow:0.9px 0 0 #8a845c,-0.9px 0 0 #8a845c,0 0.9px 0 #8a845c,0 -0.9px 0 #8a845c;">i</div>
<div style="position:absolute;left:354px;top:48.46px;font-size:16px;line-height:16px;white-space:pre;color:#050505;font-weight:bold;transform:scaleX(1.4313);transform-origin:0 0;font-style:italic;-webkit-text-stroke:0.9px #050505;text-shadow:0.9px 0 0 #8a845c,-0.9px 0 0 #8a845c,0 0.9px 0 #8a845c,0 -0.9px 0 #8a845c;">u</div>
<div style="position:absolute;left:356px;top:63.5px;width:12px;height:1.5px;background:#111;box-shadow:0 0 0 0.5px #bdb58a"></div>
<div style="position:absolute;left:374px;top:57px;width:17px;height:1.5px;background:#111;box-shadow:0 0 0 0.5px #8a845c"></div>
<div style="position:absolute;left:376.5px;top:48.76px;font-size:18px;line-height:18px;white-space:pre;color:#050505;font-weight:bold;transform:scaleX(1.2980);transform-origin:0 0;-webkit-text-stroke:0.9px #050505;text-shadow:0.9px 0 0 #8a845c,-0.9px 0 0 #8a845c,0 0.9px 0 #8a845c,0 -0.9px 0 #8a845c;">s</div>
<svg style="position:absolute;left:399px;top:50px;filter:drop-shadow(0 0.6px 0 #777)" width="15" height="13" viewBox="0 0 15 13"><rect x="0" y="1" width="12" height="1.6" fill="#111"/><rect x="0" y="4" width="8" height="1.6" fill="#111"/><rect x="0" y="7" width="14" height="1.6" fill="#111"/><rect x="0" y="10" width="8" height="1.6" fill="#111"/></svg>
<svg style="position:absolute;left:421px;top:50px;filter:drop-shadow(0 0.6px 0 #777)" width="15" height="13" viewBox="0 0 15 13"><rect x="0" y="1" width="14" height="1.6" fill="#111"/><rect x="0" y="4" width="14" height="1.6" fill="#111"/><rect x="0" y="7" width="14" height="1.6" fill="#111"/><rect x="0" y="10" width="14" height="1.6" fill="#111"/></svg>
<svg style="position:absolute;left:443px;top:50px;filter:drop-shadow(0 0.6px 0 #777)" width="15" height="13" viewBox="0 0 15 13"><rect x="1" y="1" width="12" height="1.6" fill="#111"/><rect x="3" y="4" width="8" height="1.6" fill="#111"/><rect x="0" y="7" width="14" height="1.6" fill="#111"/><rect x="3" y="10" width="8" height="1.6" fill="#111"/></svg>
<svg style="position:absolute;left:465px;top:50px;filter:drop-shadow(0 0.6px 0 #777)" width="15" height="13" viewBox="0 0 15 13"><rect x="2" y="1" width="12" height="1.6" fill="#111"/><rect x="6" y="4" width="8" height="1.6" fill="#111"/><rect x="0" y="7" width="14" height="1.6" fill="#111"/><rect x="6" y="10" width="8" height="1.6" fill="#111"/></svg>
<div style="position:absolute;left:488px;top:47px;width:1px;height:19px;background:#2a2a2a"></div>
<div style="position:absolute;left:489px;top:47px;width:1px;height:19px;background:#3c3c3c"></div>
<svg style="position:absolute;left:498px;top:50px;" width="16" height="14" viewBox="0 0 16 14"><rect x="0.9" y="0.9" width="14.2" height="11.7" fill="#333" stroke="#0a0a0a" stroke-width="1.7"/><rect x="3" y="3.5" width="9" height="1.6" fill="#111"/><rect x="3" y="6" width="6" height="1.6" fill="#111"/><rect x="3" y="2.5" width="9" height="1" fill="#d8d8d8"/><rect x="3" y="5" width="6" height="1" fill="#c8c8c8"/></svg>
<svg style="position:absolute;left:520px;top:50px;" width="16" height="14" viewBox="0 0 16 14"><rect x="0.9" y="0.9" width="14.2" height="11.7" fill="#333" stroke="#0a0a0a" stroke-width="1.7"/><rect x="3" y="5" width="9" height="1.6" fill="#111"/><rect x="3" y="7.5" width="6" height="1.6" fill="#111"/><rect x="3" y="4" width="9" height="1" fill="#d8d8d8"/><rect x="3" y="6.5" width="6" height="1" fill="#c8c8c8"/></svg>
<svg style="position:absolute;left:542px;top:50px;" width="16" height="14" viewBox="0 0 16 14"><rect x="0.9" y="0.9" width="14.2" height="11.7" fill="#333" stroke="#0a0a0a" stroke-width="1.7"/><rect x="3" y="7.5" width="9" height="1.6" fill="#111"/><rect x="3" y="10" width="6" height="1.6" fill="#111"/><rect x="3" y="6.5" width="9" height="1" fill="#d8d8d8"/><rect x="3" y="9" width="6" height="1" fill="#c8c8c8"/></svg>
<div style="position:absolute;left:563px;top:46px;width:33px;height:21px;background:#373737;border:1px solid #2e2e2e;border-radius:3px"></div>
<div style="position:absolute;left:567px;top:50px;width:13px;height:13px;border:1.5px solid #3a4860;background:#323232"></div>
<svg style="position:absolute;left:586px;top:54px;" width="6" height="4" viewBox="0 0 6 4"><path d="M0 0 H6 L3 3.5 Z" fill="#111"/></svg>
<div style="position:absolute;left:593px;top:48px;width:1px;height:1px;background:#4ac8c8"></div>
<div style="position:absolute;left:601px;top:51px;width:2px;height:2px;background:#4a4a4a"></div>
<div style="position:absolute;left:601px;top:56px;width:2px;height:2px;background:#4a4a4a"></div>
<div style="position:absolute;left:601px;top:61px;width:2px;height:2px;background:#4a4a4a"></div>
<div style="position:absolute;left:609px;top:46px;width:43px;height:21px;background:#373737;border:1px solid #2e2e2e;border-radius:3px"></div>
<div style="position:absolute;left:631px;top:47px;width:20px;height:19px;background:#444444"></div>
<svg style="position:absolute;left:637px;top:52px;" width="10" height="8" viewBox="0 0 10 8"><path d="M1 1.5 L5 5.5 L9 1.5" stroke="#a0a0a0" stroke-width="1.3" fill="none"/></svg>
<div style="position:absolute;left:4px;top:77px;width:2px;height:2px;background:#4a4a4a"></div>
<div style="position:absolute;left:4px;top:82px;width:2px;height:2px;background:#4a4a4a"></div>
<div style="position:absolute;left:4px;top:87px;width:2px;height:2px;background:#4a4a4a"></div>
<svg style="position:absolute;left:14px;top:75px;" width="20" height="17" viewBox="0 0 20 17"><rect x="2" y="3" width="5" height="9" fill="url(#gv)" stroke="#5a86d8" stroke-width="0.5"/><rect x="8" y="3" width="5" height="12" fill="url(#gv)" stroke="#5a86d8" stroke-width="0.5"/><path d="M1 1.5 L13 1.5" stroke="#bbb" stroke-width="1"/></svg>
<svg style="position:absolute;left:36px;top:75px;" width="20" height="17" viewBox="0 0 20 17"><rect x="2" y="4" width="5" height="9" fill="url(#gv)" stroke="#5a86d8" stroke-width="0.5"/><rect x="8" y="1" width="5" height="12" fill="url(#gv)" stroke="#5a86d8" stroke-width="0.5"/><path d="M1 14.5 L13 14.5" stroke="#bbb" stroke-width="1"/></svg>
<svg style="position:absolute;left:58px;top:75px;" width="20" height="17" viewBox="0 0 20 17"><rect x="2" y="2" width="9" height="5" fill="url(#gh)" stroke="#5a86d8" stroke-width="0.5"/><rect x="2" y="8" width="12" height="5" fill="url(#gh)" stroke="#5a86d8" stroke-width="0.5"/><path d="M1.5 1 L1.5 14" stroke="#333" stroke-width="1"/></svg>
<svg style="position:absolute;left:80px;top:75px;" width="20" height="17" viewBox="0 0 20 17"><rect x="4" y="2" width="9" height="5" fill="url(#gh)" stroke="#5a86d8" stroke-width="0.5"/><rect x="1" y="8" width="12" height="5" fill="url(#gh)" stroke="#5a86d8" stroke-width="0.5"/><path d="M13.5 1 L13.5 14" stroke="#333" stroke-width="1"/></svg>
<svg style="position:absolute;left:102px;top:75px;" width="20" height="17" viewBox="0 0 20 17"><rect x="2" y="3" width="5" height="9" fill="url(#gv)" stroke="#5a86d8" stroke-width="0.5"/><rect x="8" y="1" width="5" height="13" fill="url(#gv)" stroke="#5a86d8" stroke-width="0.5"/></svg>
<svg style="position:absolute;left:124px;top:75px;" width="20" height="17" viewBox="0 0 20 17"><rect x="3" y="2" width="9" height="5" fill="url(#gh)" stroke="#5a86d8" stroke-width="0.5"/><rect x="1" y="8" width="13" height="5" fill="url(#gh)" stroke="#5a86d8" stroke-width="0.5"/></svg>
<svg style="position:absolute;left:154px;top:75px;" width="20" height="17" viewBox="0 0 20 17"><rect x="3" y="2" width="5" height="9" fill="url(#gv)" stroke="#5a86d8" stroke-width="0.5"/><rect x="9" y="2" width="5" height="12" fill="url(#gv)" stroke="#5a86d8" stroke-width="0.5"/><path d="M0 1 L16 1" stroke="#2a6ab8" stroke-width="1"/><path d="M0 15 L16 15" stroke="#2a5a90" stroke-width="1"/></svg>
<svg style="position:absolute;left:185px;top:75px;" width="20" height="17" viewBox="0 0 20 17"><rect x="2" y="5" width="5" height="9" fill="url(#gv)" stroke="#5a86d8" stroke-width="0.5"/><rect x="8" y="2" width="5" height="12" fill="url(#gv)" stroke="#5a86d8" stroke-width="0.5"/><path d="M0 14.5 L16 14.5" stroke="#2a6ab8" stroke-width="1"/><path d="M0 1 L16 1" stroke="#2a4a70" stroke-width="1"/></svg>
<svg style="position:absolute;left:214px;top:75px;" width="20" height="17" viewBox="0 0 20 17"><rect x="2" y="3" width="9" height="5" fill="url(#gh)" stroke="#5a86d8" stroke-width="0.5"/><rect x="2" y="9" width="12" height="5" fill="url(#gh)" stroke="#5a86d8" stroke-width="0.5"/><path d="M1.5 0 L1.5 15" stroke="#2a6ab8" stroke-width="1"/><path d="M15.5 0 L15.5 15" stroke="#2a4a70" stroke-width="1"/></svg>
<svg style="position:absolute;left:244px;top:75px;" width="20" height="17" viewBox="0 0 20 17"><rect x="4" y="3" width="10" height="5" fill="url(#gh)" stroke="#5a86d8" stroke-width="0.5"/><rect x="1" y="9" width="13" height="5" fill="url(#gh)" stroke="#5a86d8" stroke-width="0.5"/><path d="M14.5 0 L14.5 15" stroke="#2a6ab8" stroke-width="1"/><path d="M0.5 0 L0.5 15" stroke="#2a4a70" stroke-width="1"/></svg>
<svg style="position:absolute;left:274px;top:75px;" width="20" height="17" viewBox="0 0 20 17"><rect x="1.5" y="1" width="7" height="5" fill="url(#gh)" stroke="#5a86d8" stroke-width="0.5"/><rect x="9" y="1" width="6" height="5" fill="url(#gh)" stroke="#5a86d8" stroke-width="0.5"/><path d="M0.5 0 L0.5 15" stroke="#2a6ab8" stroke-width="1"/><path d="M15.5 0 L15.5 15" stroke="#2a4a70" stroke-width="1"/></svg>
<svg style="position:absolute;left:296px;top:75px;" width="20" height="17" viewBox="0 0 20 17"><rect x="0.5" y="1" width="7" height="5" fill="url(#gh)" stroke="#5a86d8" stroke-width="0.5"/><rect x="7" y="4" width="9" height="5" fill="url(#gh)" stroke="#5a86d8" stroke-width="0.5"/><path d="M2 12.5 L15 12.5" stroke="#58b048" stroke-width="2"/><path d="M1 12.5 L5 9.5 L5 15.5 Z" fill="#58b048"/></svg>
<svg style="position:absolute;left:318px;top:75px;" width="20" height="17" viewBox="0 0 20 17"><rect x="0.5" y="4" width="9" height="5" fill="url(#gh)" stroke="#5a86d8" stroke-width="0.5"/><rect x="9" y="1" width="7" height="5" fill="url(#gh)" stroke="#5a86d8" stroke-width="0.5"/><path d="M1 12.5 L14 12.5" stroke="#58b048" stroke-width="2"/><path d="M16 12.5 L12 9.5 L12 15.5 Z" fill="#58b048"/></svg>
<svg style="position:absolute;left:347px;top:75px;" width="18" height="16" viewBox="0 0 18 16"><rect x="1" y="6" width="3" height="8" fill="url(#gv)" stroke="#4a7ad0" stroke-width="0.6"/><rect x="14" y="6" width="3" height="8" fill="url(#gv)" stroke="#4a7ad0" stroke-width="0.6"/><path d="M5 10 H13" stroke="#58b048" stroke-width="1.6"/><path d="M4.5 10 L7 8 V12 Z M13.5 10 L11 8 V12 Z" fill="#58b048"/></svg>
<svg style="position:absolute;left:377px;top:75px;" width="18" height="16" viewBox="0 0 18 16"><rect x="1" y="6" width="3" height="8" fill="url(#gv)" stroke="#4a7ad0" stroke-width="0.6"/><rect x="14" y="6" width="3" height="8" fill="url(#gv)" stroke="#4a7ad0" stroke-width="0.6"/><path d="M5 10 H13" stroke="#58b048" stroke-width="1.6"/><path d="M4.5 10 L7 8 V12 Z M13.5 10 L11 8 V12 Z" fill="#58b048"/><path d="M9 1.5 V6 M6.8 3.7 H11.2" stroke="#222" stroke-width="1.1"/></svg>
<svg style="position:absolute;left:407px;top:75px;" width="18" height="16" viewBox="0 0 18 16"><rect x="1" y="6" width="3" height="8" fill="url(#gv)" stroke="#4a7ad0" stroke-width="0.6"/><rect x="14" y="6" width="3" height="8" fill="url(#gv)" stroke="#4a7ad0" stroke-width="0.6"/><path d="M5 10 H13" stroke="#58b048" stroke-width="1.6"/><path d="M4.5 10 L7 8 V12 Z M13.5 10 L11 8 V12 Z" fill="#58b048"/><path d="M6.8 3.5 H11.2" stroke="#333" stroke-width="1.1"/></svg>
<svg style="position:absolute;left:433px;top:75px;" width="18" height="16" viewBox="0 0 18 16"><rect x="1" y="6" width="3" height="8" fill="url(#gv)" stroke="#4a7ad0" stroke-width="0.6"/><rect x="14" y="6" width="3" height="8" fill="url(#gv)" stroke="#4a7ad0" stroke-width="0.6"/><path d="M5 10 H13" stroke="#58b048" stroke-width="1.6"/><path d="M4.5 10 L7 8 V12 Z M13.5 10 L11 8 V12 Z" fill="#58b048"/><ellipse cx="9" cy="3.5" rx="1.6" ry="2.3" fill="none" stroke="#222" stroke-width="0.9"/></svg>
<svg style="position:absolute;left:465px;top:75px;" width="16" height="16" viewBox="0 0 16 16"><rect x="1" y="0.5" width="8" height="2.5" fill="url(#gh)" stroke="#4a7ad0" stroke-width="0.6"/><rect x="1" y="13" width="8" height="2.5" fill="url(#gh)" stroke="#4a7ad0" stroke-width="0.6"/><path d="M5 4 V12" stroke="#58b048" stroke-width="1.8"/><path d="M5 3.5 L3 6.5 H7 Z M5 12.5 L3 9.5 H7 Z" fill="#58b048"/></svg>
<svg style="position:absolute;left:495px;top:75px;" width="16" height="16" viewBox="0 0 16 16"><rect x="1" y="0.5" width="8" height="2.5" fill="url(#gh)" stroke="#4a7ad0" stroke-width="0.6"/><rect x="1" y="13" width="8" height="2.5" fill="url(#gh)" stroke="#4a7ad0" stroke-width="0.6"/><path d="M5 4 V12" stroke="#58b048" stroke-width="1.8"/><path d="M5 3.5 L3 6.5 H7 Z M5 12.5 L3 9.5 H7 Z" fill="#58b048"/><path d="M12.5 5 V10 M10 7.5 H15" stroke="#222" stroke-width="1.1"/></svg>
<svg style="position:absolute;left:526px;top:75px;" width="16" height="16" viewBox="0 0 16 16"><rect x="1" y="0.5" width="8" height="2.5" fill="url(#gh)" stroke="#4a7ad0" stroke-width="0.6"/><rect x="1" y="13" width="8" height="2.5" fill="url(#gh)" stroke="#4a7ad0" stroke-width="0.6"/><path d="M5 4 V12" stroke="#58b048" stroke-width="1.8"/><path d="M5 3.5 L3 6.5 H7 Z M5 12.5 L3 9.5 H7 Z" fill="#58b048"/><path d="M10 7.5 H15" stroke="#333" stroke-width="1.1"/></svg>
<svg style="position:absolute;left:557px;top:75px;" width="16" height="16" viewBox="0 0 16 16"><rect x="1" y="0.5" width="8" height="2.5" fill="url(#gh)" stroke="#4a7ad0" stroke-width="0.6"/><rect x="1" y="13" width="8" height="2.5" fill="url(#gh)" stroke="#4a7ad0" stroke-width="0.6"/><path d="M5 4 V12" stroke="#58b048" stroke-width="1.8"/><path d="M5 3.5 L3 6.5 H7 Z M5 12.5 L3 9.5 H7 Z" fill="#58b048"/><ellipse cx="13" cy="7.5" rx="1.7" ry="2.4" fill="none" stroke="#222" stroke-width="0.9"/></svg>
<svg style="position:absolute;left:590px;top:75px;" width="17" height="16" viewBox="0 0 17 16"><rect x="0.7" y="0.7" width="15" height="10" fill="#c8dcf8" stroke="#3a70d0" stroke-width="1.3"/><path d="M3.5 5.7 H13" stroke="#48a038" stroke-width="1.8"/><path d="M2 5.7 L5.5 2.7 V8.7 Z M14.5 5.7 L11 2.7 V8.7 Z" fill="#58b048" stroke="#2a7a20" stroke-width="0.4"/></svg>
<svg style="position:absolute;left:620px;top:75px;" width="17" height="16" viewBox="0 0 17 16"><rect x="0.7" y="0.7" width="15" height="10" fill="#c8dcf8" stroke="#3a70d0" stroke-width="1.3"/><path d="M3.5 5.7 H13" stroke="#48a038" stroke-width="1.8"/><path d="M2 5.7 L5.5 2.7 V8.7 Z M14.5 5.7 L11 2.7 V8.7 Z" fill="#58b048" stroke="#2a7a20" stroke-width="0.4"/><path d="M8.3 10.5 V15.5 M5.8 13 H10.8" stroke="#222" stroke-width="1.1"/></svg>
<svg style="position:absolute;left:650px;top:75px;" width="17" height="16" viewBox="0 0 17 16"><rect x="0.7" y="0.7" width="15" height="10" fill="#c8dcf8" stroke="#3a70d0" stroke-width="1.3"/><path d="M3.5 5.7 H13" stroke="#48a038" stroke-width="1.8"/><path d="M2 5.7 L5.5 2.7 V8.7 Z M14.5 5.7 L11 2.7 V8.7 Z" fill="#58b048" stroke="#2a7a20" stroke-width="0.4"/><path d="M5.8 13.5 H10.8" stroke="#333" stroke-width="1.1"/></svg>
<svg style="position:absolute;left:685px;top:75px;" width="17" height="17" viewBox="0 0 17 17"><rect x="0.7" y="0.7" width="10" height="15" fill="#c8dcf8" stroke="#3a70d0" stroke-width="1.3"/><path d="M5.7 3.5 V13" stroke="#48a038" stroke-width="1.8"/><path d="M5.7 2 L2.7 5.5 H8.7 Z M5.7 14.5 L2.7 11 H8.7 Z" fill="#58b048" stroke="#2a7a20" stroke-width="0.4"/></svg>
<svg style="position:absolute;left:715px;top:75px;" width="17" height="17" viewBox="0 0 17 17"><rect x="0.7" y="0.7" width="10" height="15" fill="#c8dcf8" stroke="#3a70d0" stroke-width="1.3"/><path d="M5.7 3.5 V13" stroke="#48a038" stroke-width="1.8"/><path d="M5.7 2 L2.7 5.5 H8.7 Z M5.7 14.5 L2.7 11 H8.7 Z" fill="#58b048" stroke="#2a7a20" stroke-width="0.4"/><path d="M11 8 H16" stroke="#333" stroke-width="1.1"/></svg>
<svg style="position:absolute;left:745px;top:75px;" width="17" height="17" viewBox="0 0 17 17"><rect x="0.7" y="0.7" width="10" height="15" fill="#c8dcf8" stroke="#3a70d0" stroke-width="1.3"/><path d="M5.7 3.5 V13" stroke="#48a038" stroke-width="1.8"/><path d="M5.7 2 L2.7 5.5 H8.7 Z M5.7 14.5 L2.7 11 H8.7 Z" fill="#58b048" stroke="#2a7a20" stroke-width="0.4"/><path d="M13.5 5.5 V10.5 M11 8 H16" stroke="#222" stroke-width="1.1"/></svg>
<svg style="position:absolute;left:777px;top:75px;" width="17" height="16" viewBox="0 0 17 16"><rect x="0.7" y="0.7" width="15.6" height="14.6" fill="#c8dcf8" stroke="#3a70d0" stroke-width="1.3"/><path d="M8.5 3 V13 M3.5 8 H13.5 M4 4 L13 12 M13 4 L4 12" stroke="#58b048" stroke-width="1.4"/><circle cx="8.5" cy="8" r="2" fill="#d8e8fc"/></svg>
<svg style="position:absolute;left:811px;top:77px;" width="17" height="12" viewBox="0 0 17 12"><rect x="0.7" y="0.7" width="15.6" height="10.6" rx="3" fill="#c8dcf8" stroke="#3a70d0" stroke-width="1.3"/><path d="M2 6 L6 2.5 V9.5 Z M15 6 L11 2.5 V9.5 Z" fill="#58b048" stroke="#2a7a20" stroke-width="0.4"/></svg>
<svg style="position:absolute;left:843px;top:75px;" width="13" height="16" viewBox="0 0 13 16"><rect x="0.7" y="0.7" width="11.6" height="14.6" rx="2" fill="#c8dcf8" stroke="#3a70d0" stroke-width="1.3"/><path d="M6.5 2 L3 6 H10 Z M6.5 14 L3 10 H10 Z" fill="#58b048" stroke="#2a7a20" stroke-width="0.4"/></svg>
<svg style="position:absolute;left:871px;top:75px;" width="17" height="16" viewBox="0 0 17 16"><rect x="2" y="2" width="13" height="12" fill="#c8dcf8" stroke="#90b0e0" stroke-width="0.6"/><path d="M0.5 0.5 L5.5 1 L1 5.5 Z M16.5 0.5 L11.5 1 L16 5.5 Z M0.5 15.5 L5.5 15 L1 10.5 Z M16.5 15.5 L11.5 15 L16 10.5 Z" fill="#58b048" stroke="#2a7a20" stroke-width="0.5"/></svg>
<svg style="position:absolute;left:905px;top:75px;" width="17" height="16" viewBox="0 0 17 16"><rect x="7" y="1" width="3" height="14" fill="url(#gv)" stroke="#3a70d0" stroke-width="0.8"/><path d="M0.5 8 L6.5 8 M16.5 8 L10.5 8" stroke="#58b048" stroke-width="2"/><path d="M6.5 8 L3.5 5 V11 Z M10.5 8 L13.5 5 V11 Z" fill="#58b048"/></svg>
<svg style="position:absolute;left:936px;top:75px;" width="15" height="16" viewBox="0 0 15 16"><rect x="0.5" y="6.5" width="14" height="3" fill="url(#gh)" stroke="#3a70d0" stroke-width="0.8"/><path d="M7.5 0.5 V6 M7.5 15.5 V10" stroke="#58b048" stroke-width="2"/><path d="M7.5 6 L4.5 3 H10.5 Z M7.5 10 L4.5 13 H10.5 Z" fill="#58b048"/></svg>
<svg style="position:absolute;left:965px;top:75px;" width="17" height="16" viewBox="0 0 17 16"><rect x="4" y="4" width="9" height="8" fill="url(#gh)" stroke="#3a70d0" stroke-width="0.6"/><path d="M0.5 0.5 L4.5 4.5 M16.5 0.5 L12.5 4.5 M0.5 15.5 L4.5 11.5 M16.5 15.5 L12.5 11.5" stroke="#58b048" stroke-width="2"/><path d="M5 5 L1.5 4.5 L4.5 1.5 Z M12 5 L15.5 4.5 L12.5 1.5 Z M5 11 L1.5 11.5 L4.5 14.5 Z M12 11 L15.5 11.5 L12.5 14.5 Z" fill="#58b048"/></svg>
<svg style="position:absolute;left:996px;top:75px;" width="17" height="17" viewBox="0 0 17 17"><path d="M0.5 0.5 H9 L12.5 4 V15.5 H0.5 Z" fill="#fafafa" stroke="#c8c8c8"/><path d="M2.5 5 H10 M2.5 7 H10 M2.5 9 H10 M2.5 11 H8" stroke="#888" stroke-width="0.8"/><path d="M10 10 L15 15 M15 11 V15 H11" stroke="#48a038" stroke-width="1.6" fill="none"/></svg>
<div style="position:absolute;left:320px;top:104px;width:1px;height:2px;background:#000"></div>
<div style="position:absolute;left:326px;top:104px;width:1px;height:2px;background:#000"></div>
<div style="position:absolute;left:331px;top:104px;width:1px;height:2px;background:#000"></div>
<div style="position:absolute;left:337px;top:103px;width:1px;height:4px;background:#000"></div>
<div style="position:absolute;left:343px;top:104px;width:1px;height:2px;background:#000"></div>
<div style="position:absolute;left:348px;top:104px;width:1px;height:2px;background:#000"></div>
<div style="position:absolute;left:354px;top:104px;width:1px;height:2px;background:#000"></div>
<div style="position:absolute;left:360px;top:104px;width:1px;height:2px;background:#000"></div>
<div style="position:absolute;left:366px;top:109px;width:1px;height:3px;background:#000"></div>
<div style="position:absolute;left:371px;top:104px;width:1px;height:2px;background:#000"></div>
<div style="position:absolute;left:377px;top:104px;width:1px;height:2px;background:#000"></div>
<div style="position:absolute;left:383px;top:104px;width:1px;height:2px;background:#000"></div>
<div style="position:absolute;left:388px;top:104px;width:1px;height:2px;background:#000"></div>
<div style="position:absolute;left:394px;top:103px;width:1px;height:4px;background:#000"></div>
<div style="position:absolute;left:400px;top:104px;width:1px;height:2px;background:#000"></div>
<div style="position:absolute;left:405px;top:104px;width:1px;height:2px;background:#000"></div>
<div style="position:absolute;left:411px;top:104px;width:1px;height:2px;background:#000"></div>
<div style="position:absolute;left:417px;top:104px;width:1px;height:2px;background:#000"></div>
<div style="position:absolute;left:422px;top:109px;width:1px;height:3px;background:#000"></div>
<div style="position:absolute;left:428px;top:104px;width:1px;height:2px;background:#000"></div>
<div style="position:absolute;left:434px;top:104px;width:1px;height:2px;background:#000"></div>
<div style="position:absolute;left:439px;top:104px;width:1px;height:2px;background:#000"></div>
<div style="position:absolute;left:445px;top:104px;width:1px;height:2px;background:#000"></div>
<div style="position:absolute;left:451px;top:103px;width:1px;height:4px;background:#000"></div>
<div style="position:absolute;left:456px;top:104px;width:1px;height:2px;background:#000"></div>
<div style="position:absolute;left:462px;top:104px;width:1px;height:2px;background:#000"></div>
<div style="position:absolute;left:468px;top:104px;width:1px;height:2px;background:#000"></div>
<div style="position:absolute;left:473px;top:104px;width:1px;height:2px;background:#000"></div>
<div style="position:absolute;left:479px;top:109px;width:1px;height:3px;background:#000"></div>
<div style="position:absolute;left:485px;top:104px;width:1px;height:2px;background:#000"></div>
<div style="position:absolute;left:490px;top:104px;width:1px;height:2px;background:#000"></div>
<div style="position:absolute;left:496px;top:104px;width:1px;height:2px;background:#000"></div>
<div style="position:absolute;left:502px;top:104px;width:1px;height:2px;background:#000"></div>
<div style="position:absolute;left:507px;top:103px;width:1px;height:4px;background:#000"></div>
<div style="position:absolute;left:513px;top:104px;width:1px;height:2px;background:#000"></div>
<div style="position:absolute;left:519px;top:104px;width:1px;height:2px;background:#000"></div>
<div style="position:absolute;left:524px;top:104px;width:1px;height:2px;background:#000"></div>
<div style="position:absolute;left:530px;top:104px;width:1px;height:2px;background:#000"></div>
<div style="position:absolute;left:536px;top:109px;width:1px;height:3px;background:#000"></div>
<div style="position:absolute;left:541px;top:104px;width:1px;height:2px;background:#000"></div>
<div style="position:absolute;left:547px;top:104px;width:1px;height:2px;background:#000"></div>
<div style="position:absolute;left:553px;top:104px;width:1px;height:2px;background:#000"></div>
<div style="position:absolute;left:558px;top:104px;width:1px;height:2px;background:#000"></div>
<div style="position:absolute;left:564px;top:103px;width:1px;height:4px;background:#000"></div>
<div style="position:absolute;left:570px;top:104px;width:1px;height:2px;background:#000"></div>
<div style="position:absolute;left:575px;top:104px;width:1px;height:2px;background:#000"></div>
<div style="position:absolute;left:581px;top:104px;width:1px;height:2px;background:#000"></div>
<div style="position:absolute;left:587px;top:104px;width:1px;height:2px;background:#000"></div>
<div style="position:absolute;left:592px;top:109px;width:1px;height:3px;background:#000"></div>
<div style="position:absolute;left:598px;top:104px;width:1px;height:2px;background:#000"></div>
<div style="position:absolute;left:604px;top:104px;width:1px;height:2px;background:#000"></div>
<div style="position:absolute;left:609px;top:104px;width:1px;height:2px;background:#000"></div>
<div style="position:absolute;left:615px;top:104px;width:1px;height:2px;background:#000"></div>
<div style="position:absolute;left:621px;top:103px;width:1px;height:4px;background:#000"></div>
<div style="position:absolute;left:626px;top:104px;width:1px;height:2px;background:#000"></div>
<div style="position:absolute;left:632px;top:104px;width:1px;height:2px;background:#000"></div>
<div style="position:absolute;left:638px;top:104px;width:1px;height:2px;background:#000"></div>
<div style="position:absolute;left:643px;top:104px;width:1px;height:2px;background:#000"></div>
<div style="position:absolute;left:649px;top:109px;width:1px;height:3px;background:#000"></div>
<div style="position:absolute;left:655px;top:104px;width:1px;height:2px;background:#000"></div>
<div style="position:absolute;left:660px;top:104px;width:1px;height:2px;background:#000"></div>
<div style="position:absolute;left:666px;top:104px;width:1px;height:2px;background:#000"></div>
<div style="position:absolute;left:672px;top:104px;width:1px;height:2px;background:#000"></div>
<div style="position:absolute;left:677px;top:103px;width:1px;height:4px;background:#000"></div>
<div style="position:absolute;left:683px;top:104px;width:1px;height:2px;background:#000"></div>
<div style="position:absolute;left:689px;top:104px;width:1px;height:2px;background:#000"></div>
<div style="position:absolute;left:694px;top:104px;width:1px;height:2px;background:#000"></div>
<div style="position:absolute;left:700px;top:104px;width:1px;height:2px;background:#000"></div>
<div style="position:absolute;left:706px;top:109px;width:1px;height:3px;background:#000"></div>
<div style="position:absolute;left:711px;top:104px;width:1px;height:2px;background:#000"></div>
<div style="position:absolute;left:717px;top:104px;width:1px;height:2px;background:#000"></div>
<div style="position:absolute;left:723px;top:104px;width:1px;height:2px;background:#000"></div>
<div style="position:absolute;left:728px;top:104px;width:1px;height:2px;background:#000"></div>
<div style="position:absolute;left:734px;top:103px;width:1px;height:4px;background:#000"></div>
<div style="position:absolute;left:740px;top:104px;width:1px;height:2px;background:#000"></div>
<div style="position:absolute;left:745px;top:104px;width:1px;height:2px;background:#000"></div>
<div style="position:absolute;left:751px;top:104px;width:1px;height:2px;background:#000"></div>
<div style="position:absolute;left:757px;top:104px;width:1px;height:2px;background:#000"></div>
<div style="position:absolute;left:762px;top:109px;width:1px;height:3px;background:#000"></div>
<div style="position:absolute;left:768px;top:104px;width:1px;height:2px;background:#000"></div>
<div style="position:absolute;left:774px;top:104px;width:1px;height:2px;background:#000"></div>
<div style="position:absolute;left:779px;top:104px;width:1px;height:2px;background:#000"></div>
<div style="position:absolute;left:785px;top:104px;width:1px;height:2px;background:#000"></div>
<div style="position:absolute;left:791px;top:103px;width:1px;height:4px;background:#000"></div>
<div style="position:absolute;left:796px;top:104px;width:1px;height:2px;background:#000"></div>
<div style="position:absolute;left:802px;top:104px;width:1px;height:2px;background:#000"></div>
<div style="position:absolute;left:808px;top:104px;width:1px;height:2px;background:#000"></div>
<div style="position:absolute;left:813px;top:104px;width:1px;height:2px;background:#000"></div>
<div style="position:absolute;left:819px;top:109px;width:1px;height:3px;background:#000"></div>
<div style="position:absolute;left:825px;top:104px;width:1px;height:2px;background:#000"></div>
<div style="position:absolute;left:830px;top:104px;width:1px;height:2px;background:#000"></div>
<div style="position:absolute;left:836px;top:104px;width:1px;height:2px;background:#000"></div>
<div style="position:absolute;left:842px;top:104px;width:1px;height:2px;background:#000"></div>
<div style="position:absolute;left:847px;top:103px;width:1px;height:4px;background:#000"></div>
<div style="position:absolute;left:853px;top:104px;width:1px;height:2px;background:#000"></div>
<div style="position:absolute;left:859px;top:104px;width:1px;height:2px;background:#000"></div>
<div style="position:absolute;left:864px;top:104px;width:1px;height:2px;background:#000"></div>
<div style="position:absolute;left:870px;top:104px;width:1px;height:2px;background:#000"></div>
<div style="position:absolute;left:876px;top:109px;width:1px;height:3px;background:#000"></div>
<div style="position:absolute;left:881px;top:104px;width:1px;height:2px;background:#000"></div>
<div style="position:absolute;left:887px;top:104px;width:1px;height:2px;background:#000"></div>
<div style="position:absolute;left:893px;top:104px;width:1px;height:2px;background:#000"></div>
<div style="position:absolute;left:898px;top:104px;width:1px;height:2px;background:#000"></div>
<div style="position:absolute;left:904px;top:103px;width:1px;height:4px;background:#000"></div>
<div style="position:absolute;left:910px;top:104px;width:1px;height:2px;background:#000"></div>
<div style="position:absolute;left:915px;top:104px;width:1px;height:2px;background:#000"></div>
<div style="position:absolute;left:921px;top:104px;width:1px;height:2px;background:#000"></div>
<div style="position:absolute;left:927px;top:104px;width:1px;height:2px;background:#000"></div>
<div style="position:absolute;left:932px;top:109px;width:1px;height:3px;background:#000"></div>
<div style="position:absolute;left:938px;top:104px;width:1px;height:2px;background:#000"></div>
<div style="position:absolute;left:944px;top:104px;width:1px;height:2px;background:#000"></div>
<div style="position:absolute;left:949px;top:104px;width:1px;height:2px;background:#000"></div>
<div style="position:absolute;left:955px;top:104px;width:1px;height:2px;background:#000"></div>
<div style="position:absolute;left:961px;top:103px;width:1px;height:4px;background:#000"></div>
<div style="position:absolute;left:966px;top:104px;width:1px;height:2px;background:#000"></div>
<div style="position:absolute;left:972px;top:104px;width:1px;height:2px;background:#000"></div>
<div style="position:absolute;left:978px;top:104px;width:1px;height:2px;background:#000"></div>
<div style="position:absolute;left:983px;top:104px;width:1px;height:2px;background:#000"></div>
<div style="position:absolute;left:989px;top:109px;width:1px;height:3px;background:#000"></div>
<div style="position:absolute;left:995px;top:104px;width:1px;height:2px;background:#000"></div>
<div style="position:absolute;left:1000px;top:104px;width:1px;height:2px;background:#000"></div>
<div style="position:absolute;left:1006px;top:104px;width:1px;height:2px;background:#000"></div>
<div style="position:absolute;left:1012px;top:104px;width:1px;height:2px;background:#000"></div>
<div style="position:absolute;left:1017px;top:103px;width:1px;height:4px;background:#000"></div>
<div style="position:absolute;left:1023px;top:104px;width:1px;height:2px;background:#000"></div>
<div style="position:absolute;left:1029px;top:104px;width:1px;height:2px;background:#000"></div>
<div style="position:absolute;left:1034px;top:104px;width:1px;height:2px;background:#000"></div>
<div style="position:absolute;left:1040px;top:104px;width:1px;height:2px;background:#000"></div>
<div style="position:absolute;left:1046px;top:109px;width:1px;height:3px;background:#000"></div>
<div style="position:absolute;left:1051px;top:104px;width:1px;height:2px;background:#000"></div>
<div style="position:absolute;left:1057px;top:104px;width:1px;height:2px;background:#000"></div>
<div style="position:absolute;left:1063px;top:104px;width:1px;height:2px;background:#000"></div>
<div style="position:absolute;left:1068px;top:104px;width:1px;height:2px;background:#000"></div>
<div style="position:absolute;left:1074px;top:103px;width:1px;height:4px;background:#000"></div>
<div style="position:absolute;left:1080px;top:104px;width:1px;height:2px;background:#000"></div>
<div style="position:absolute;left:1085px;top:104px;width:1px;height:2px;background:#000"></div>
<div style="position:absolute;left:1091px;top:104px;width:1px;height:2px;background:#000"></div>
<div style="position:absolute;left:1097px;top:104px;width:1px;height:2px;background:#000"></div>
<div style="position:absolute;left:1102px;top:109px;width:1px;height:3px;background:#000"></div>
<div style="position:absolute;left:1108px;top:104px;width:1px;height:2px;background:#000"></div>
<div style="position:absolute;left:1114px;top:104px;width:1px;height:2px;background:#000"></div>
<div style="position:absolute;left:1119px;top:104px;width:1px;height:2px;background:#000"></div>
<div style="position:absolute;left:1125px;top:104px;width:1px;height:2px;background:#000"></div>
<div style="position:absolute;left:1131px;top:103px;width:1px;height:4px;background:#000"></div>
<div style="position:absolute;left:1136px;top:104px;width:1px;height:2px;background:#000"></div>
<div style="position:absolute;left:1142px;top:104px;width:1px;height:2px;background:#000"></div>
<div style="position:absolute;left:1148px;top:104px;width:1px;height:2px;background:#000"></div>
<div style="position:absolute;left:1153px;top:104px;width:1px;height:2px;background:#000"></div>
<div style="position:absolute;left:1159px;top:109px;width:1px;height:3px;background:#000"></div>
<div style="position:absolute;left:1165px;top:104px;width:1px;height:2px;background:#000"></div>
<div style="position:absolute;left:1170px;top:104px;width:1px;height:2px;background:#000"></div>
<div style="position:absolute;left:1176px;top:104px;width:1px;height:2px;background:#000"></div>
<div style="position:absolute;left:1182px;top:104px;width:1px;height:2px;background:#000"></div>
<div style="position:absolute;left:1188px;top:103px;width:1px;height:4px;background:#000"></div>
<div style="position:absolute;left:1193px;top:104px;width:1px;height:2px;background:#000"></div>
<div style="position:absolute;left:1199px;top:104px;width:1px;height:2px;background:#000"></div>
<div style="position:absolute;left:1205px;top:104px;width:1px;height:2px;background:#000"></div>
<div style="position:absolute;left:1210px;top:104px;width:1px;height:2px;background:#000"></div>
<div style="position:absolute;left:1216px;top:109px;width:1px;height:3px;background:#000"></div>
<div style="position:absolute;left:1222px;top:104px;width:1px;height:2px;background:#000"></div>
<div style="position:absolute;left:1227px;top:104px;width:1px;height:2px;background:#000"></div>
<div style="position:absolute;left:1233px;top:104px;width:1px;height:2px;background:#000"></div>
<div style="position:absolute;left:1239px;top:104px;width:1px;height:2px;background:#000"></div>
<div style="position:absolute;left:1244px;top:103px;width:1px;height:4px;background:#000"></div>
<div style="position:absolute;left:1250px;top:104px;width:1px;height:2px;background:#000"></div>
<div style="position:absolute;left:1256px;top:104px;width:1px;height:2px;background:#000"></div>
<div style="position:absolute;left:1261px;top:104px;width:1px;height:2px;background:#000"></div>
<div style="position:absolute;left:1267px;top:104px;width:1px;height:2px;background:#000"></div>
<div style="position:absolute;left:1273px;top:109px;width:1px;height:3px;background:#000"></div>
<div style="position:absolute;left:1278px;top:104px;width:1px;height:2px;background:#000"></div>
<div style="position:absolute;left:1284px;top:104px;width:1px;height:2px;background:#000"></div>
<div style="position:absolute;left:1290px;top:104px;width:1px;height:2px;background:#000"></div>
<div style="position:absolute;left:1295px;top:104px;width:1px;height:2px;background:#000"></div>
<div style="position:absolute;left:1301px;top:103px;width:1px;height:4px;background:#000"></div>
<div style="position:absolute;left:1307px;top:104px;width:1px;height:2px;background:#000"></div>
<div style="position:absolute;left:1312px;top:104px;width:1px;height:2px;background:#000"></div>
<div style="position:absolute;left:1318px;top:104px;width:1px;height:2px;background:#000"></div>
<div style="position:absolute;left:1324px;top:104px;width:1px;height:2px;background:#000"></div>
<div style="position:absolute;left:1329px;top:109px;width:1px;height:3px;background:#000"></div>
<div style="position:absolute;left:1335px;top:104px;width:1px;height:2px;background:#000"></div>
<div style="position:absolute;left:1341px;top:104px;width:1px;height:2px;background:#000"></div>
<div style="position:absolute;left:1346px;top:104px;width:1px;height:2px;background:#000"></div>
<div style="position:absolute;left:1352px;top:104px;width:1px;height:2px;background:#000"></div>
<div style="position:absolute;left:1358px;top:103px;width:1px;height:4px;background:#000"></div>
<div style="position:absolute;left:1363px;top:104px;width:1px;height:2px;background:#000"></div>
<div style="position:absolute;left:1369px;top:104px;width:1px;height:2px;background:#000"></div>
<div style="position:absolute;left:1375px;top:104px;width:1px;height:2px;background:#000"></div>
<div style="position:absolute;left:1380px;top:104px;width:1px;height:2px;background:#000"></div>
<div style="position:absolute;left:1386px;top:109px;width:1px;height:3px;background:#000"></div>
<div style="position:absolute;left:1392px;top:104px;width:1px;height:2px;background:#000"></div>
<div style="position:absolute;left:1397px;top:104px;width:1px;height:2px;background:#000"></div>
<div style="position:absolute;left:1403px;top:104px;width:1px;height:2px;background:#000"></div>
<div style="position:absolute;left:1409px;top:104px;width:1px;height:2px;background:#000"></div>
<div style="position:absolute;left:1414px;top:103px;width:1px;height:4px;background:#000"></div>
<div style="position:absolute;left:1420px;top:104px;width:1px;height:2px;background:#000"></div>
<div style="position:absolute;left:1426px;top:104px;width:1px;height:2px;background:#000"></div>
<div style="position:absolute;left:1431px;top:104px;width:1px;height:2px;background:#000"></div>
<div style="position:absolute;left:1437px;top:104px;width:1px;height:2px;background:#000"></div>
<div style="position:absolute;left:1443px;top:109px;width:1px;height:3px;background:#000"></div>
<div style="position:absolute;left:1448px;top:104px;width:1px;height:2px;background:#000"></div>
<div style="position:absolute;left:1454px;top:104px;width:1px;height:2px;background:#000"></div>
<div style="position:absolute;left:1460px;top:104px;width:1px;height:2px;background:#000"></div>
<div style="position:absolute;left:1465px;top:104px;width:1px;height:2px;background:#000"></div>
<div style="position:absolute;left:1471px;top:103px;width:1px;height:4px;background:#000"></div>
<div style="position:absolute;left:1477px;top:104px;width:1px;height:2px;background:#000"></div>
<div style="position:absolute;left:1482px;top:104px;width:1px;height:2px;background:#000"></div>
<div style="position:absolute;left:1488px;top:104px;width:1px;height:2px;background:#000"></div>
<div style="position:absolute;left:1494px;top:104px;width:1px;height:2px;background:#000"></div>
<div style="position:absolute;left:1499px;top:109px;width:1px;height:3px;background:#000"></div>
<div style="position:absolute;left:1505px;top:104px;width:1px;height:2px;background:#000"></div>
<div style="position:absolute;left:1511px;top:104px;width:1px;height:2px;background:#000"></div>
<div style="position:absolute;left:1516px;top:104px;width:1px;height:2px;background:#000"></div>
<div style="position:absolute;left:1522px;top:104px;width:1px;height:2px;background:#000"></div>
<div style="position:absolute;left:1528px;top:103px;width:1px;height:4px;background:#000"></div>
<div style="position:absolute;left:1533px;top:104px;width:1px;height:2px;background:#000"></div>
<div style="position:absolute;left:1539px;top:104px;width:1px;height:2px;background:#000"></div>
<div style="position:absolute;left:1545px;top:104px;width:1px;height:2px;background:#000"></div>
<div style="position:absolute;left:1550px;top:104px;width:1px;height:2px;background:#000"></div>
<div style="position:absolute;left:362.7px;top:97.94px;font-size:10px;line-height:10px;white-space:pre;color:#000;transform:scaleX(1.0067);transform-origin:0 0;">0</div>
<div style="position:absolute;left:419.39px;top:97.94px;font-size:10px;line-height:10px;white-space:pre;color:#000;transform:scaleX(1.0067);transform-origin:0 0;">1</div>
<div style="position:absolute;left:476.08px;top:97.94px;font-size:10px;line-height:10px;white-space:pre;color:#000;transform:scaleX(1.0067);transform-origin:0 0;">2</div>
<div style="position:absolute;left:532.77px;top:97.94px;font-size:10px;line-height:10px;white-space:pre;color:#000;transform:scaleX(1.0067);transform-origin:0 0;">3</div>
<div style="position:absolute;left:589.46px;top:97.94px;font-size:10px;line-height:10px;white-space:pre;color:#000;transform:scaleX(1.0067);transform-origin:0 0;">4</div>
<div style="position:absolute;left:646.1500000000001px;top:97.94px;font-size:10px;line-height:10px;white-space:pre;color:#000;transform:scaleX(1.0067);transform-origin:0 0;">5</div>
<div style="position:absolute;left:702.84px;top:97.94px;font-size:10px;line-height:10px;white-space:pre;color:#000;transform:scaleX(1.0067);transform-origin:0 0;">6</div>
<div style="position:absolute;left:759.53px;top:97.94px;font-size:10px;line-height:10px;white-space:pre;color:#000;transform:scaleX(1.0067);transform-origin:0 0;">7</div>
<div style="position:absolute;left:816.22px;top:97.94px;font-size:10px;line-height:10px;white-space:pre;color:#000;transform:scaleX(1.0067);transform-origin:0 0;">8</div>
<div style="position:absolute;left:872.9100000000001px;top:97.94px;font-size:10px;line-height:10px;white-space:pre;color:#000;transform:scaleX(1.0067);transform-origin:0 0;">9</div>
<div style="position:absolute;left:926.8px;top:97.94px;font-size:10px;line-height:10px;white-space:pre;color:#000;transform:scaleX(1.0067);transform-origin:0 0;">10</div>
<div style="position:absolute;left:983.4899999999999px;top:97.94px;font-size:10px;line-height:10px;white-space:pre;color:#000;transform:scaleX(1.0779);transform-origin:0 0;">11</div>
<div style="position:absolute;left:1040.18px;top:97.94px;font-size:10px;line-height:10px;white-space:pre;color:#000;transform:scaleX(1.0067);transform-origin:0 0;">12</div>
<div style="position:absolute;left:1096.8700000000001px;top:97.94px;font-size:10px;line-height:10px;white-space:pre;color:#000;transform:scaleX(1.0067);transform-origin:0 0;">13</div>
<div style="position:absolute;left:1153.56px;top:97.94px;font-size:10px;line-height:10px;white-space:pre;color:#000;transform:scaleX(1.0067);transform-origin:0 0;">14</div>
<div style="position:absolute;left:1210.25px;top:97.94px;font-size:10px;line-height:10px;white-space:pre;color:#000;transform:scaleX(1.0067);transform-origin:0 0;">15</div>
<div style="position:absolute;left:1266.94px;top:97.94px;font-size:10px;line-height:10px;white-space:pre;color:#000;transform:scaleX(1.0067);transform-origin:0 0;">16</div>
<div style="position:absolute;left:1323.63px;top:97.94px;font-size:10px;line-height:10px;white-space:pre;color:#000;transform:scaleX(1.0067);transform-origin:0 0;">17</div>
<div style="position:absolute;left:1380.3200000000002px;top:97.94px;font-size:10px;line-height:10px;white-space:pre;color:#000;transform:scaleX(1.0067);transform-origin:0 0;">18</div>
<div style="position:absolute;left:1437.01px;top:97.94px;font-size:10px;line-height:10px;white-space:pre;color:#000;transform:scaleX(1.0067);transform-origin:0 0;">19</div>
<div style="position:absolute;left:1493.7px;top:97.94px;font-size:10px;line-height:10px;white-space:pre;color:#000;transform:scaleX(1.0067);transform-origin:0 0;">20</div>
<div style="position:absolute;left:307px;top:114px;width:2px;height:1px;background:#000"></div>
<div style="position:absolute;left:307px;top:119px;width:2px;height:1px;background:#000"></div>
<div style="position:absolute;left:307px;top:125px;width:2px;height:1px;background:#000"></div>
<div style="position:absolute;left:307px;top:131px;width:2px;height:1px;background:#000"></div>
<div style="position:absolute;left:312px;top:137px;width:3px;height:1px;background:#000"></div>
<div style="position:absolute;left:307px;top:142px;width:2px;height:1px;background:#000"></div>
<div style="position:absolute;left:307px;top:148px;width:2px;height:1px;background:#000"></div>
<div style="position:absolute;left:307px;top:154px;width:2px;height:1px;background:#000"></div>
<div style="position:absolute;left:307px;top:159px;width:2px;height:1px;background:#000"></div>
<div style="position:absolute;left:306px;top:165px;width:4px;height:1px;background:#000"></div>
<div style="position:absolute;left:307px;top:171px;width:2px;height:1px;background:#000"></div>
<div style="position:absolute;left:307px;top:176px;width:2px;height:1px;background:#000"></div>
<div style="position:absolute;left:307px;top:182px;width:2px;height:1px;background:#000"></div>
<div style="position:absolute;left:307px;top:188px;width:2px;height:1px;background:#000"></div>
<div style="position:absolute;left:312px;top:193px;width:3px;height:1px;background:#000"></div>
<div style="position:absolute;left:307px;top:199px;width:2px;height:1px;background:#000"></div>
<div style="position:absolute;left:307px;top:205px;width:2px;height:1px;background:#000"></div>
<div style="position:absolute;left:307px;top:210px;width:2px;height:1px;background:#000"></div>
<div style="position:absolute;left:307px;top:216px;width:2px;height:1px;background:#000"></div>
<div style="position:absolute;left:306px;top:222px;width:4px;height:1px;background:#000"></div>
<div style="position:absolute;left:307px;top:227px;width:2px;height:1px;background:#000"></div>
<div style="position:absolute;left:307px;top:233px;width:2px;height:1px;background:#000"></div>
<div style="position:absolute;left:307px;top:239px;width:2px;height:1px;background:#000"></div>
<div style="position:absolute;left:307px;top:244px;width:2px;height:1px;background:#000"></div>
<div style="position:absolute;left:312px;top:250px;width:3px;height:1px;background:#000"></div>
<div style="position:absolute;left:307px;top:256px;width:2px;height:1px;background:#000"></div>
<div style="position:absolute;left:307px;top:261px;width:2px;height:1px;background:#000"></div>
<div style="position:absolute;left:307px;top:267px;width:2px;height:1px;background:#000"></div>
<div style="position:absolute;left:307px;top:273px;width:2px;height:1px;background:#000"></div>
<div style="position:absolute;left:306px;top:278px;width:4px;height:1px;background:#000"></div>
<div style="position:absolute;left:307px;top:284px;width:2px;height:1px;background:#000"></div>
<div style="position:absolute;left:307px;top:290px;width:2px;height:1px;background:#000"></div>
<div style="position:absolute;left:307px;top:295px;width:2px;height:1px;background:#000"></div>
<div style="position:absolute;left:307px;top:301px;width:2px;height:1px;background:#000"></div>
<div style="position:absolute;left:312px;top:307px;width:3px;height:1px;background:#000"></div>
<div style="position:absolute;left:307px;top:312px;width:2px;height:1px;background:#000"></div>
<div style="position:absolute;left:307px;top:318px;width:2px;height:1px;background:#000"></div>
<div style="position:absolute;left:307px;top:324px;width:2px;height:1px;background:#000"></div>
<div style="position:absolute;left:307px;top:329px;width:2px;height:1px;background:#000"></div>
<div style="position:absolute;left:306px;top:335px;width:4px;height:1px;background:#000"></div>
<div style="position:absolute;left:307px;top:341px;width:2px;height:1px;background:#000"></div>
<div style="position:absolute;left:307px;top:346px;width:2px;height:1px;background:#000"></div>
<div style="position:absolute;left:307px;top:352px;width:2px;height:1px;background:#000"></div>
<div style="position:absolute;left:307px;top:358px;width:2px;height:1px;background:#000"></div>
<div style="position:absolute;left:312px;top:363px;width:3px;height:1px;background:#000"></div>
<div style="position:absolute;left:307px;top:369px;width:2px;height:1px;background:#000"></div>
<div style="position:absolute;left:307px;top:375px;width:2px;height:1px;background:#000"></div>
<div style="position:absolute;left:307px;top:380px;width:2px;height:1px;background:#000"></div>
<div style="position:absolute;left:307px;top:386px;width:2px;height:1px;background:#000"></div>
<div style="position:absolute;left:306px;top:392px;width:4px;height:1px;background:#000"></div>
<div style="position:absolute;left:307px;top:397px;width:2px;height:1px;background:#000"></div>
<div style="position:absolute;left:307px;top:403px;width:2px;height:1px;background:#000"></div>
<div style="position:absolute;left:307px;top:409px;width:2px;height:1px;background:#000"></div>
<div style="position:absolute;left:307px;top:414px;width:2px;height:1px;background:#000"></div>
<div style="position:absolute;left:312px;top:420px;width:3px;height:1px;background:#000"></div>
<div style="position:absolute;left:307px;top:426px;width:2px;height:1px;background:#000"></div>
<div style="position:absolute;left:307px;top:431px;width:2px;height:1px;background:#000"></div>
<div style="position:absolute;left:307px;top:437px;width:2px;height:1px;background:#000"></div>
<div style="position:absolute;left:307px;top:443px;width:2px;height:1px;background:#000"></div>
<div style="position:absolute;left:306px;top:448px;width:4px;height:1px;background:#000"></div>
<div style="position:absolute;left:307px;top:454px;width:2px;height:1px;background:#000"></div>
<div style="position:absolute;left:307px;top:460px;width:2px;height:1px;background:#000"></div>
<div style="position:absolute;left:307px;top:465px;width:2px;height:1px;background:#000"></div>
<div style="position:absolute;left:307px;top:471px;width:2px;height:1px;background:#000"></div>
<div style="position:absolute;left:312px;top:477px;width:3px;height:1px;background:#000"></div>
<div style="position:absolute;left:307px;top:482px;width:2px;height:1px;background:#000"></div>
<div style="position:absolute;left:307px;top:488px;width:2px;height:1px;background:#000"></div>
<div style="position:absolute;left:307px;top:494px;width:2px;height:1px;background:#000"></div>
<div style="position:absolute;left:307px;top:499px;width:2px;height:1px;background:#000"></div>
<div style="position:absolute;left:306px;top:505px;width:4px;height:1px;background:#000"></div>
<div style="position:absolute;left:307px;top:511px;width:2px;height:1px;background:#000"></div>
<div style="position:absolute;left:307px;top:516px;width:2px;height:1px;background:#000"></div>
<div style="position:absolute;left:307px;top:522px;width:2px;height:1px;background:#000"></div>
<div style="position:absolute;left:307px;top:528px;width:2px;height:1px;background:#000"></div>
<div style="position:absolute;left:312px;top:533px;width:3px;height:1px;background:#000"></div>
<div style="position:absolute;left:307px;top:539px;width:2px;height:1px;background:#000"></div>
<div style="position:absolute;left:307px;top:545px;width:2px;height:1px;background:#000"></div>
<div style="position:absolute;left:307px;top:550px;width:2px;height:1px;background:#000"></div>
<div style="position:absolute;left:307px;top:556px;width:2px;height:1px;background:#000"></div>
<div style="position:absolute;left:306px;top:562px;width:4px;height:1px;background:#000"></div>
<div style="position:absolute;left:307px;top:567px;width:2px;height:1px;background:#000"></div>
<div style="position:absolute;left:307px;top:573px;width:2px;height:1px;background:#000"></div>
<div style="position:absolute;left:307px;top:579px;width:2px;height:1px;background:#000"></div>
<div style="position:absolute;left:307px;top:584px;width:2px;height:1px;background:#000"></div>
<div style="position:absolute;left:312px;top:590px;width:3px;height:1px;background:#000"></div>
<div style="position:absolute;left:307px;top:596px;width:2px;height:1px;background:#000"></div>
<div style="position:absolute;left:307px;top:601px;width:2px;height:1px;background:#000"></div>
<div style="position:absolute;left:307px;top:607px;width:2px;height:1px;background:#000"></div>
<div style="position:absolute;left:307px;top:613px;width:2px;height:1px;background:#000"></div>
<div style="position:absolute;left:306px;top:618px;width:4px;height:1px;background:#000"></div>
<div style="position:absolute;left:307px;top:624px;width:2px;height:1px;background:#000"></div>
<div style="position:absolute;left:307px;top:630px;width:2px;height:1px;background:#000"></div>
<div style="position:absolute;left:307px;top:635px;width:2px;height:1px;background:#000"></div>
<div style="position:absolute;left:307px;top:641px;width:2px;height:1px;background:#000"></div>
<div style="position:absolute;left:312px;top:647px;width:3px;height:1px;background:#000"></div>
<div style="position:absolute;left:307px;top:652px;width:2px;height:1px;background:#000"></div>
<div style="position:absolute;left:307px;top:658px;width:2px;height:1px;background:#000"></div>
<div style="position:absolute;left:307px;top:664px;width:2px;height:1px;background:#000"></div>
<div style="position:absolute;left:307px;top:669px;width:2px;height:1px;background:#000"></div>
<div style="position:absolute;left:306px;top:675px;width:4px;height:1px;background:#000"></div>
<div style="position:absolute;left:307px;top:681px;width:2px;height:1px;background:#000"></div>
<div style="position:absolute;left:307px;top:686px;width:2px;height:1px;background:#000"></div>
<div style="position:absolute;left:307px;top:692px;width:2px;height:1px;background:#000"></div>
<div style="position:absolute;left:307px;top:698px;width:2px;height:1px;background:#000"></div>
<div style="position:absolute;left:312px;top:703px;width:3px;height:1px;background:#000"></div>
<div style="position:absolute;left:307px;top:709px;width:2px;height:1px;background:#000"></div>
<div style="position:absolute;left:307px;top:715px;width:2px;height:1px;background:#000"></div>
<div style="position:absolute;left:307px;top:720px;width:2px;height:1px;background:#000"></div>
<div style="position:absolute;left:307px;top:726px;width:2px;height:1px;background:#000"></div>
<div style="position:absolute;left:306px;top:732px;width:4px;height:1px;background:#000"></div>
<div style="position:absolute;left:307px;top:737px;width:2px;height:1px;background:#000"></div>
<div style="position:absolute;left:307px;top:743px;width:2px;height:1px;background:#000"></div>
<div style="position:absolute;left:307px;top:749px;width:2px;height:1px;background:#000"></div>
<div style="position:absolute;left:307px;top:754px;width:2px;height:1px;background:#000"></div>
<div style="position:absolute;left:312px;top:760px;width:3px;height:1px;background:#000"></div>
<div style="position:absolute;left:307px;top:766px;width:2px;height:1px;background:#000"></div>
<div style="position:absolute;left:307px;top:771px;width:2px;height:1px;background:#000"></div>
<div style="position:absolute;left:307px;top:777px;width:2px;height:1px;background:#000"></div>
<div style="position:absolute;left:300.5px;top:138.3px;width:9.6px;height:10px;transform:rotate(-90deg);transform-origin:0 0;font-size:10px;line-height:10px;color:#000;white-space:pre">0</div>
<div style="position:absolute;left:300.5px;top:195.0px;width:9.6px;height:10px;transform:rotate(-90deg);transform-origin:0 0;font-size:10px;line-height:10px;color:#000;white-space:pre">1</div>
<div style="position:absolute;left:300.5px;top:251.7px;width:9.6px;height:10px;transform:rotate(-90deg);transform-origin:0 0;font-size:10px;line-height:10px;color:#000;white-space:pre">2</div>
<div style="position:absolute;left:300.5px;top:308.4px;width:9.6px;height:10px;transform:rotate(-90deg);transform-origin:0 0;font-size:10px;line-height:10px;color:#000;white-space:pre">3</div>
<div style="position:absolute;left:300.5px;top:365.1px;width:9.6px;height:10px;transform:rotate(-90deg);transform-origin:0 0;font-size:10px;line-height:10px;color:#000;white-space:pre">4</div>
<div style="position:absolute;left:300.5px;top:421.8px;width:9.6px;height:10px;transform:rotate(-90deg);transform-origin:0 0;font-size:10px;line-height:10px;color:#000;white-space:pre">5</div>
<div style="position:absolute;left:300.5px;top:478.4px;width:9.6px;height:10px;transform:rotate(-90deg);transform-origin:0 0;font-size:10px;line-height:10px;color:#000;white-space:pre">6</div>
<div style="position:absolute;left:300.5px;top:535.1px;width:9.6px;height:10px;transform:rotate(-90deg);transform-origin:0 0;font-size:10px;line-height:10px;color:#000;white-space:pre">7</div>
<div style="position:absolute;left:300.5px;top:591.8px;width:9.6px;height:10px;transform:rotate(-90deg);transform-origin:0 0;font-size:10px;line-height:10px;color:#000;white-space:pre">8</div>
<div style="position:absolute;left:300.5px;top:648.5px;width:9.6px;height:10px;transform:rotate(-90deg);transform-origin:0 0;font-size:10px;line-height:10px;color:#000;white-space:pre">9</div>
<div style="position:absolute;left:300.5px;top:708.0px;width:15.2px;height:10px;transform:rotate(-90deg);transform-origin:0 0;font-size:10px;line-height:10px;color:#000;white-space:pre">10</div>
<div style="position:absolute;left:300.5px;top:764.7px;width:15.2px;height:10px;transform:rotate(-90deg);transform-origin:0 0;font-size:10px;line-height:10px;color:#000;white-space:pre">11</div>
<svg style="position:absolute;left:306px;top:471px;" width="10" height="10" viewBox="0 0 10 10"><path d="M0.5 0.5 H5 L9.5 5 L5 9.5 H0.5 Z" fill="#e8e4cc" stroke="#777" stroke-width="0.8"/></svg>
<svg style="position:absolute;left:306px;top:573px;" width="10" height="10" viewBox="0 0 10 10"><path d="M0.5 0.5 H5 L9.5 5 L5 9.5 H0.5 Z" fill="#e8e4cc" stroke="#777" stroke-width="0.8"/></svg>
<div style="position:absolute;left:0px;top:0px;width:1px;height:794px;background:#86a35e"></div>
<svg style="position:absolute;left:1580px;top:124px;" width="10" height="14" viewBox="0 0 10 14"><path d="M1.5 0 V12.5 H9" stroke="#111" stroke-width="1.6" fill="none"/><path d="M1.5 6 H6" stroke="#111" stroke-width="1.6"/><rect x="6" y="4" width="4" height="4" fill="#9a9af0"/><rect x="6" y="10.5" width="4" height="4" fill="#9a9af0"/></svg>
<div style="position:absolute;left:805px;top:137px;width:230px;height:1px;background:repeating-linear-gradient(90deg,#d8d8f6 0 9px,transparent 9px 13px,#e4e4f8 13px 17px,transparent 17px 22px)"></div>
<div style="position:absolute;left:801px;top:697px;width:233px;height:1px;background:repeating-linear-gradient(90deg,#d8d8f6 0 9px,transparent 9px 13px,#e4e4f8 13px 17px,transparent 17px 22px)"></div>
<div style="position:absolute;left:769px;top:733px;width:304px;height:1px;background:repeating-linear-gradient(90deg,#d8d8f6 0 9px,transparent 9px 13px,#e4e4f8 13px 17px,transparent 17px 22px)"></div>
<div style="position:absolute;left:784px;top:775px;width:234px;height:1px;background:repeating-linear-gradient(90deg,#d8d8f6 0 9px,transparent 9px 13px,#e4e4f8 13px 17px,transparent 17px 22px)"></div>
<div style="position:absolute;left:1516px;top:429px;width:6px;height:1px;background:repeating-linear-gradient(90deg,#c8c040 0 1px,transparent 1px 2px)"></div>
<div style="position:absolute;left:1516px;top:533px;width:6px;height:1px;background:repeating-linear-gradient(90deg,#c8c040 0 1px,transparent 1px 2px)"></div>
<div style="position:absolute;left:1571px;top:461px;width:2px;height:2px;background:#5a5a5a"></div>
<div style="position:absolute;left:297px;top:461px;width:1px;height:2px;background:#666"></div>
<div style="position:absolute;left:1571px;top:466px;width:2px;height:2px;background:#5a5a5a"></div>
<div style="position:absolute;left:297px;top:466px;width:1px;height:2px;background:#666"></div>
<div style="position:absolute;left:1571px;top:471px;width:2px;height:2px;background:#5a5a5a"></div>
<div style="position:absolute;left:297px;top:471px;width:1px;height:2px;background:#666"></div>
</body></html>
